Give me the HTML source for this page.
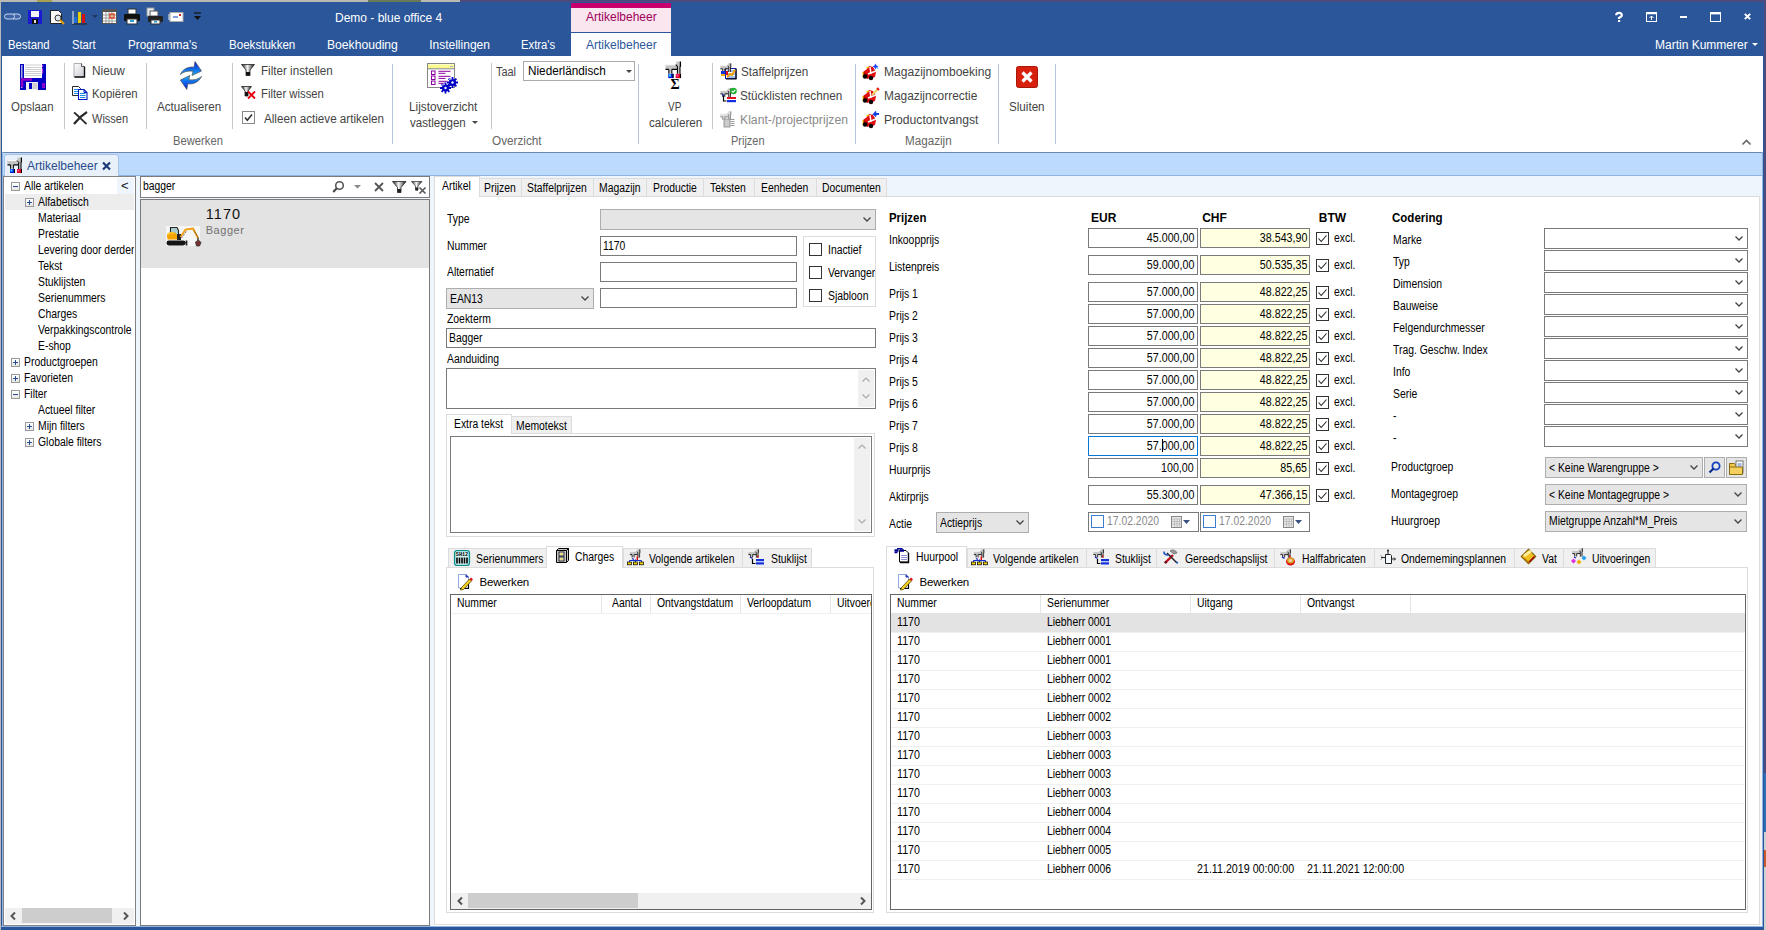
<!DOCTYPE html>
<html><head><meta charset="utf-8">
<style>
*{box-sizing:border-box;margin:0;padding:0}
html,body{width:1766px;height:930px;overflow:hidden;background:#fff;font-family:"Liberation Sans",sans-serif;position:relative}
.a{position:absolute}
svg.a{overflow:visible}
.t{position:absolute;white-space:nowrap;line-height:1}
.f{letter-spacing:-0.3px}
</style></head><body>

<div class="a" style="left:0px;top:0px;width:460px;height:2px;background:#b9b9b4;"></div>
<div class="a" style="left:460px;top:0px;width:1306px;height:2px;background:#4d4a7e;"></div>
<div class="a" style="left:368px;top:0px;width:53px;height:2px;background:#6a7a58;"></div>
<div class="a" style="left:37px;top:0px;width:15px;height:2px;background:#a8a050;"></div>
<div class="a" style="left:1764px;top:0px;width:2px;height:930px;background:#4d4a7e;"></div>
<div class="a" style="left:0px;top:2px;width:1764px;height:54px;background:#2b579a;"></div>
<svg class="a" style="left:5px;top:12px;" width="15" height="9" viewBox="0 0 15 9"><path d="M2 2h5a2.5 2.5 0 0 1 0 5H2a2.5 2.5 0 0 1 0-5zM8 2h5a2.5 2.5 0 0 1 0 5H8" fill="#3d63a8" stroke="#c9d6ee" stroke-width="1"/></svg>
<svg class="a" style="left:28px;top:10px;" width="14" height="14" viewBox="0 0 14 14"><rect x="0" y="0" width="14" height="14" fill="#1a1ad0"/><rect x="3" y="1" width="8" height="6" fill="#f4f4f4"/><rect x="4" y="9" width="6" height="5" fill="#111"/><rect x="6" y="10" width="2" height="3" fill="#ddd"/></svg>
<svg class="a" style="left:50px;top:10px;" width="15" height="14" viewBox="0 0 15 14"><path d="M0.5 0.5h8l3 3v10h-11z" fill="#f8f8f8" stroke="#222"/><circle cx="8" cy="8" r="3" fill="#dfe6ee" stroke="#333"/><path d="M10 10l4 4" stroke="#e8a000" stroke-width="2"/></svg>
<svg class="a" style="left:71px;top:9px;" width="16" height="16" viewBox="0 0 16 16"><path d="M1 15h15" stroke="#222"/><rect x="3" y="8" width="3" height="6" fill="#1f6fd8"/><rect x="7" y="3" width="3" height="11" fill="#e8d000"/><rect x="11" y="5" width="3" height="9" fill="#d81010"/><path d="M2 2v13" stroke="#eee"/></svg>
<svg class="a" style="left:92px;top:15px;" width="6" height="3" viewBox="0 0 6 3"><path d="M0 0h6l-3 3z" fill="#1d3563"/></svg>
<svg class="a" style="left:102px;top:9px;" width="15" height="15" viewBox="0 0 15 15"><rect x="0" y="0" width="15" height="15" fill="#555"/><rect x="1" y="3" width="13" height="11" fill="#fff"/><path d="M1 6h13M1 9h13M1 12h13M4 3v11M7 3v11M10 3v11" stroke="#999" stroke-width="1"/><rect x="8" y="5" width="4" height="4" fill="none" stroke="#e04010" stroke-width="1.3"/></svg>
<svg class="a" style="left:124px;top:9px;" width="16" height="16" viewBox="0 0 16 16"><rect x="4" y="0" width="8" height="5" fill="#fff" stroke="#333"/><rect x="0" y="5" width="16" height="7" rx="1" fill="#111"/><rect x="3" y="10" width="10" height="5" fill="#fff" stroke="#333"/><rect x="6" y="11" width="4" height="2" fill="#2a9fd0"/></svg>
<svg class="a" style="left:146px;top:8px;" width="17" height="17" viewBox="0 0 17 17"><rect x="1" y="0" width="7" height="8" fill="#e8eef6" stroke="#999"/><rect x="4" y="3" width="8" height="5" fill="#fff" stroke="#555"/><rect x="2" y="8" width="15" height="6" rx="1" fill="#222"/><rect x="5" y="12" width="9" height="4" fill="#fff" stroke="#333"/><rect x="8" y="13" width="3" height="1.5" fill="#2a9fd0"/></svg>
<svg class="a" style="left:168px;top:12px;" width="16" height="10" viewBox="0 0 16 10"><rect x="2" y="0.5" width="13" height="9" fill="#fff" stroke="#aaa"/><path d="M0 3h2M0 5h2M0 7h2" stroke="#eee"/><path d="M5 5h5" stroke="#5a7fd0" stroke-width="1.5"/><rect x="11" y="2" width="2" height="2" fill="#d02020"/></svg>
<svg class="a" style="left:194px;top:13px;" width="7" height="7" viewBox="0 0 7 7"><path d="M0 0h7" stroke="#111" stroke-width="1.2"/><path d="M0 3h7l-3.5 4z" fill="#111"/></svg>
<div class="t " style="left:335px;top:12.00px;font-size:12px;color:#fff;">Demo - blue office 4</div>
<svg class="a" style="left:1615px;top:12px;" width="8" height="10" viewBox="0 0 8 10"><path d="M1.2 3.2C1.2 1.5 2.5 0.8 4 0.8S6.8 1.6 6.8 3.2 5 5 4 5.8V7" fill="none" stroke="#fff" stroke-width="2.2"/><rect x="3" y="8" width="2.2" height="2" fill="#fff"/></svg>
<svg class="a" style="left:1646px;top:12px;" width="11" height="10" viewBox="0 0 11 10"><rect x="0.5" y="0.5" width="10" height="9" fill="none" stroke="#fff" stroke-width="1"/><path d="M1 1.5h9" stroke="#fff" stroke-width="1.5"/><path d="M5.5 8V4M3.5 6L5.5 4L7.5 6" fill="none" stroke="#fff" stroke-width="1"/></svg>
<div class="a" style="left:1680px;top:16px;width:7px;height:2px;background:#fff;"></div>
<svg class="a" style="left:1710px;top:12px;" width="11" height="10" viewBox="0 0 11 10"><rect x="0.5" y="0.5" width="10" height="9" fill="none" stroke="#fff" stroke-width="1"/><path d="M0.5 1.5h10" stroke="#fff" stroke-width="1.8"/></svg>
<svg class="a" style="left:1744px;top:13px;" width="7" height="7" viewBox="0 0 7 7"><path d="M0.8 0.8L6.2 6.2M6.2 0.8L0.8 6.2" stroke="#fff" stroke-width="1.9"/></svg>
<div class="a" style="left:571px;top:3px;width:100px;height:5px;background:#c8006e;"></div>
<div class="a" style="left:571px;top:8px;width:100px;height:24px;background:#f9e6ef;"></div>
<div class="t " style="left:586px;top:11.00px;font-size:12px;color:#a0005a;">Artikelbeheer</div>
<div class="t " style="left:8.2px;top:39.00px;font-size:12px;color:#fff;transform:scaleX(0.945);transform-origin:0 0;">Bestand</div>
<div class="t " style="left:72.3px;top:39.00px;font-size:12px;color:#fff;transform:scaleX(0.935);transform-origin:0 0;">Start</div>
<div class="t " style="left:128.4px;top:39.00px;font-size:12px;color:#fff;transform:scaleX(0.972);transform-origin:0 0;">Programma's</div>
<div class="t " style="left:228.7px;top:39.00px;font-size:12px;color:#fff;transform:scaleX(0.965);transform-origin:0 0;">Boekstukken</div>
<div class="t " style="left:327.4px;top:39.00px;font-size:12px;color:#fff;transform:scaleX(1.011);transform-origin:0 0;">Boekhouding</div>
<div class="t " style="left:429.2px;top:39.00px;font-size:12px;color:#fff;transform:scaleX(1.0);transform-origin:0 0;">Instellingen</div>
<div class="t " style="left:521.4px;top:39.00px;font-size:12px;color:#fff;transform:scaleX(0.939);transform-origin:0 0;">Extra's</div>
<div class="t " style="left:1655px;top:39.00px;font-size:12px;color:#fff;">Martin Kummerer</div>
<svg class="a" style="left:1752px;top:43px;" width="6" height="3" viewBox="0 0 6 3"><path d="M0 0h6l-3 3z" fill="#fff"/></svg>
<div class="a" style="left:571px;top:33px;width:100px;height:24px;background:#fff;"></div>
<div class="t " style="left:586px;top:39.00px;font-size:12px;color:#2b579a;">Artikelbeheer</div>
<div class="a" style="left:2px;top:56px;width:1760px;height:96px;background:#fff;"></div>
<div class="a" style="left:2px;top:152px;width:1760px;height:1px;background:#6f86ad;"></div>
<div class="a" style="left:64px;top:63px;width:1px;height:66px;background:#c6c6c6;"></div>
<div class="a" style="left:146px;top:63px;width:1px;height:66px;background:#c6c6c6;"></div>
<div class="a" style="left:232px;top:63px;width:1px;height:66px;background:#c6c6c6;"></div>
<div class="a" style="left:392px;top:64px;width:1px;height:80px;background:#b4c4dc;"></div>
<div class="a" style="left:491px;top:63px;width:1px;height:66px;background:#c6c6c6;"></div>
<div class="a" style="left:638px;top:64px;width:1px;height:80px;background:#b4c4dc;"></div>
<div class="a" style="left:712px;top:63px;width:1px;height:66px;background:#c6c6c6;"></div>
<div class="a" style="left:855px;top:64px;width:1px;height:80px;background:#b4c4dc;"></div>
<div class="a" style="left:998px;top:64px;width:1px;height:80px;background:#b4c4dc;"></div>
<div class="a" style="left:1055px;top:64px;width:1px;height:80px;background:#b4c4dc;"></div>
<svg class="a" style="left:20px;top:64px;" width="26" height="26" viewBox="0 0 26 26"><rect x="0" y="0" width="26" height="26" fill="#0000c4"/><rect x="1" y="1" width="1.5" height="23" fill="#a8a8e0"/><rect x="4" y="0" width="18" height="14" fill="#fff"/><path d="M5 1h16M5 3.5h16M5 5.5h16M5 7.5h16M5 9.5h16M5 11.5h16" stroke="#c8c8c8" stroke-width="0.9"/><path d="M2 14v9M2 15.5h10" stroke="#9000c8" stroke-width="2.4"/><rect x="6" y="18" width="12" height="8" fill="#f0f0f0"/><rect x="9" y="19" width="3" height="6" fill="#0000c4"/><rect x="12.5" y="19" width="5" height="6" fill="#d0d0d0"/><path d="M22.5 1v2M22.5 4.5v5" stroke="#c040e0" stroke-width="1.2"/><rect x="22" y="19" width="3" height="5" fill="#9000c8"/></svg>
<div class="t " style="left:11.1px;top:101.00px;font-size:12px;color:#444;transform:scaleX(0.953);transform-origin:0 0;">Opslaan</div>
<svg class="a" style="left:73px;top:63px;" width="13" height="15" viewBox="0 0 13 15"><defs><linearGradient id="ng" x1="0" y1="0" x2="1" y2="1"><stop offset="0" stop-color="#fff"/><stop offset="1" stop-color="#c8c8d0"/></linearGradient></defs><path d="M1 0.5h7.5l3 3V14H1z" fill="url(#ng)" stroke="#999" stroke-width="0.8"/><path d="M11.5 3.5V14H1.5" fill="none" stroke="#111" stroke-width="1.4"/><path d="M8.5 0.5v3h3" fill="#fff" stroke="#333" stroke-width="0.8"/></svg>
<div class="t " style="left:92.4px;top:65.00px;font-size:12px;color:#444;transform:scaleX(0.984);transform-origin:0 0;">Nieuw</div>
<svg class="a" style="left:72px;top:86px;" width="16" height="14" viewBox="0 0 16 14"><path d="M0.5 0.5h6l2 2v7h-8z" fill="#fff" stroke="#111" stroke-width="0.9"/><path d="M2 3.5h4M2 5.5h4M2 7.5h4" stroke="#1c8ee8" stroke-width="1"/><path d="M6.5 3.5h5.5l3 3v7H6.5z" fill="#fff" stroke="#0018c0" stroke-width="1.1"/><path d="M8 7.5h5.5M8 9.5h5.5M8 11.5h5.5" stroke="#1c8ee8" stroke-width="1"/><path d="M12 3.5v3h3" fill="none" stroke="#0018c0"/></svg>
<div class="t " style="left:92.4px;top:88.00px;font-size:12px;color:#444;transform:scaleX(0.949);transform-origin:0 0;">Kopiëren</div>
<svg class="a" style="left:73px;top:111px;" width="15" height="14" viewBox="0 0 15 14"><path d="M1 1.5C4 3.5 9 9 13.5 13" stroke="#2a2a2a" stroke-width="1.8" fill="none"/><path d="M14 1C10 3.5 4 9 1 13" stroke="#2a2a2a" stroke-width="2.2" fill="none"/></svg>
<div class="t " style="left:92.4px;top:113.00px;font-size:12px;color:#444;transform:scaleX(0.918);transform-origin:0 0;">Wissen</div>
<svg class="a" style="left:180px;top:61px;" width="22" height="30" viewBox="0 0 22 30"><defs><linearGradient id="rg" x1="0" y1="0" x2="0" y2="1"><stop offset="0" stop-color="#0018d8"/><stop offset="1" stop-color="#20b0f8"/></linearGradient><linearGradient id="rg2" x1="0" y1="1" x2="0" y2="0"><stop offset="0" stop-color="#0018d8"/><stop offset="1" stop-color="#20b0f8"/></linearGradient></defs><path d="M0.3 13.5C3 7.5 9 5.5 14 6.2L15 0.5L21.5 10L12 14.5L13 10.2C8 9.8 3.5 10.5 0.3 13.5Z" fill="url(#rg)" stroke="#505050" stroke-width="0.7"/><path d="M21.5 15.5C18.8 21.5 12.8 23.5 7.8 22.8L6.8 28.5L0.3 19L9.8 14.5L8.8 18.8C13.8 19.2 18.3 18.5 21.5 15.5Z" fill="url(#rg2)" stroke="#505050" stroke-width="0.7"/></svg>
<div class="t " style="left:157.3px;top:101.00px;font-size:12px;color:#444;transform:scaleX(0.971);transform-origin:0 0;">Actualiseren</div>
<div class="t " style="left:172.6px;top:135.00px;font-size:12px;color:#666;transform:scaleX(0.935);transform-origin:0 0;">Bewerken</div>
<svg class="a" style="left:241px;top:64px;" width="14" height="12" viewBox="0 0 14 12"><defs><linearGradient id="fg2" x1="0" x2="1"><stop offset="0" stop-color="#111"/><stop offset="0.45" stop-color="#f4f4f4"/><stop offset="1" stop-color="#111"/></linearGradient></defs><path d="M0.5 0.5h13l-4.5 5.5v5.5h-4v-5.5z" fill="url(#fg2)" stroke="#222" stroke-width="0.8"/><rect x="5" y="8" width="4" height="3.5" fill="#111"/></svg>
<div class="t " style="left:260.6px;top:65.00px;font-size:12px;color:#444;transform:scaleX(0.97);transform-origin:0 0;">Filter instellen</div>
<svg class="a" style="left:241px;top:86px;" width="16" height="14" viewBox="0 0 16 14"><path d="M0.5 0.5h10l-3.5 4.5v5h-3v-5z" fill="url(#fg2)" stroke="#222" stroke-width="0.8"/><rect x="4" y="6" width="3" height="4" fill="#111"/><path d="M7 5.5l7 7M14 5.5l-7 7" stroke="#e80010" stroke-width="1.8"/></svg>
<div class="t " style="left:260.6px;top:88.00px;font-size:12px;color:#444;transform:scaleX(0.943);transform-origin:0 0;">Filter wissen</div>
<div class="a" style="left:242px;top:111px;width:13px;height:13px;background:#fff;border:1px solid #888;"></div>
<svg class="a" style="left:242px;top:111px;" width="13" height="13" viewBox="0 0 13 13"><path d="M3 6.5L5.3 9.3L10 3.5" fill="none" stroke="#333" stroke-width="1.6"/></svg>
<div class="t " style="left:264.4px;top:113.00px;font-size:12px;color:#444;transform:scaleX(0.972);transform-origin:0 0;">Alleen actieve artikelen</div>
<svg class="a" style="left:427px;top:63px;" width="30" height="30" viewBox="0 0 30 30"><rect x="0.5" y="0.5" width="27" height="24" fill="#fff" stroke="#888" stroke-width="1"/><rect x="1" y="1.5" width="26" height="4" fill="#fafa90"/><path d="M1 5.8h26" stroke="#888"/><rect x="23" y="3" width="3" height="1" fill="#b0b0e0"/><rect x="4.5" y="8" width="3.5" height="3.5" fill="none" stroke="#8a00a0" stroke-width="1"/><rect x="4.5" y="13" width="3.5" height="3.5" fill="none" stroke="#8a00a0" stroke-width="1"/><rect x="4.5" y="18" width="3.5" height="3.5" fill="none" stroke="#8a00a0" stroke-width="1"/><path d="M11.5 8.3h12M11.5 10.3h7M11.5 13.3h12M11.5 15.4h7M11.5 18.3h9M11.5 20.3h7" stroke="#8a00a0" stroke-width="1"/><g fill="#0000c8"><circle cx="18.5" cy="25" r="3.6"/><path d="M18.5 19.5v11M13 25h11M14.6 21.1l7.8 7.8M22.4 21.1l-7.8 7.8" stroke="#0000c8" stroke-width="1.8"/><circle cx="25.5" cy="19.5" r="3.6"/><path d="M25.5 14v11M20 19.5h11M21.6 15.6l7.8 7.8M29.4 15.6l-7.8 7.8" stroke="#0000c8" stroke-width="1.8"/></g><circle cx="18.5" cy="25" r="1.2" fill="#fff"/><circle cx="25.5" cy="19.5" r="1.2" fill="#fff"/><path d="M15 22l3 -1M22 16.5l3 -1" stroke="#a0a0f0" stroke-width="1.5"/></svg>
<div class="t " style="left:408.6px;top:101.00px;font-size:12px;color:#444;transform:scaleX(0.985);transform-origin:0 0;">Lijstoverzicht</div>
<div class="t " style="left:409.7px;top:117.00px;font-size:12px;color:#444;transform:scaleX(0.961);transform-origin:0 0;">vastleggen</div>
<svg class="a" style="left:472px;top:121px;" width="6" height="3" viewBox="0 0 6 3"><path d="M0 0h6l-3 3z" fill="#444"/></svg>
<div class="t " style="left:491.5px;top:135.00px;font-size:12px;color:#666;transform:scaleX(0.979);transform-origin:0 0;">Overzicht</div>
<div class="t " style="left:496.3px;top:66.00px;font-size:12px;color:#444;transform:scaleX(0.909);transform-origin:0 0;">Taal</div>
<div class="a" style="left:523px;top:61px;width:112px;height:20px;background:#fff;border:1px solid #ababab;"></div>
<div class="t " style="left:527.5px;top:65.00px;font-size:12px;color:#000;transform:scaleX(0.979);transform-origin:0 0;">Niederländisch</div>
<svg class="a" style="left:626px;top:70px;" width="6" height="3" viewBox="0 0 6 3"><path d="M0 0h6l-3 3z" fill="#444"/></svg>
<svg class="a" style="left:665px;top:61px;" width="18" height="29" viewBox="0 0 18 29"><g transform="translate(0 0) scale(1.07)"><path d="M0.5 3.5h10.5l1 1.5v2.5H6.5v4h-3v-4H0.5z" fill="#c4c4c4"/><path d="M1 3.6h9" stroke="#fff" stroke-width="0.9"/><path d="M0.5 7.8h3M6.5 7.8h5" stroke="#000" stroke-width="1.2"/><path d="M3.6 7.8v4M6.4 7.8v4" stroke="#000" stroke-width="1"/><rect x="10.5" y="0.5" width="4" height="4.5" fill="#c4c4c4"/><path d="M14.4 0.5v5" stroke="#000" stroke-width="1.2"/><rect x="11.5" y="5" width="2.6" height="7" fill="#c4c4c4"/><path d="M11.6 5.5v6.5M14 5v7" stroke="#000" stroke-width="1"/><path d="M10 3.5l2 2" stroke="#000" stroke-width="1"/><rect x="3" y="12" width="5" height="4" fill="#0020e0"/><rect x="3.5" y="12.5" width="2" height="2" fill="#30e0ff"/><rect x="10" y="12" width="5" height="4" fill="#e00010"/><rect x="10.5" y="12.5" width="2" height="2" fill="#ff40c0"/><path d="M7.5 12v4M14.5 12v4" stroke="#000" stroke-width="1"/></g><text x="5.5" y="28" font-size="14" font-family="Liberation Serif" font-weight="bold" fill="#000">Σ</text></svg>
<div class="t " style="left:668.2px;top:101.00px;font-size:12px;color:#444;transform:scaleX(0.831);transform-origin:0 0;">VP</div>
<div class="t " style="left:649.2px;top:117.00px;font-size:12px;color:#444;transform:scaleX(0.974);transform-origin:0 0;">calculeren</div>
<svg class="a" style="left:720px;top:63px;" width="17" height="16" viewBox="0 0 17 16"><rect x="5.5" y="5.5" width="10.5" height="10" fill="#fff" stroke="#1020a0" stroke-width="1"/><path d="M16 6v10H6" fill="none" stroke="#000" stroke-width="1.2"/><path d="M7 8h8M7 11h8M7 14h8" stroke="#4080e0" stroke-width="1"/><path d="M7 14l3-3 2 1 3-5" fill="none" stroke="#f0a000" stroke-width="2"/><g transform="translate(0 0) scale(0.75)"><path d="M0.5 3.5h10.5l1 1.5v2.5H6.5v4h-3v-4H0.5z" fill="#c4c4c4"/><path d="M1 3.6h9" stroke="#fff" stroke-width="0.9"/><path d="M0.5 7.8h3M6.5 7.8h5" stroke="#000" stroke-width="1.2"/><path d="M3.6 7.8v4M6.4 7.8v4" stroke="#000" stroke-width="1"/><rect x="10.5" y="0.5" width="4" height="4.5" fill="#c4c4c4"/><path d="M14.4 0.5v5" stroke="#000" stroke-width="1.2"/><rect x="11.5" y="5" width="2.6" height="7" fill="#c4c4c4"/><path d="M11.6 5.5v6.5M14 5v7" stroke="#000" stroke-width="1"/><path d="M10 3.5l2 2" stroke="#000" stroke-width="1"/></g><rect x="1" y="8" width="4" height="3" fill="#1830e0"/><rect x="6" y="8" width="2" height="4" fill="#e01020"/><rect x="1" y="11" width="4" height="2" fill="#f0b000"/></svg>
<div class="t " style="left:741.3px;top:66.00px;font-size:12px;color:#444;transform:scaleX(0.972);transform-origin:0 0;">Staffelprijzen</div>
<svg class="a" style="left:720px;top:87px;" width="17" height="16" viewBox="0 0 17 16"><g transform="translate(0 1) scale(0.75)"><path d="M0.5 3.5h10.5l1 1.5v2.5H6.5v4h-3v-4H0.5z" fill="#c4c4c4"/><path d="M1 3.6h9" stroke="#fff" stroke-width="0.9"/><path d="M0.5 7.8h3M6.5 7.8h5" stroke="#000" stroke-width="1.2"/><path d="M3.6 7.8v4M6.4 7.8v4" stroke="#000" stroke-width="1"/><rect x="10.5" y="0.5" width="4" height="4.5" fill="#c4c4c4"/><path d="M14.4 0.5v5" stroke="#000" stroke-width="1.2"/><rect x="11.5" y="5" width="2.6" height="7" fill="#c4c4c4"/><path d="M11.6 5.5v6.5M14 5v7" stroke="#000" stroke-width="1"/><path d="M10 3.5l2 2" stroke="#000" stroke-width="1"/></g><circle cx="13.5" cy="4" r="3.3" fill="#20b030"/><path d="M11.8 4l1.3 1.3 2.2-2.5" stroke="#fff" stroke-width="1.1" fill="none"/><path d="M3.5 8v6h3" fill="none" stroke="#000" stroke-width="1.2"/><path d="M2 7.5l2 1" stroke="#1020c0" stroke-width="1.2"/><rect x="7" y="10" width="9" height="2" fill="#e01020"/><rect x="7" y="13" width="9" height="2.2" fill="#1030e0"/></svg>
<div class="t " style="left:740.3px;top:90.00px;font-size:12px;color:#444;transform:scaleX(0.977);transform-origin:0 0;">Stücklisten rechnen</div>
<svg class="a" style="left:720px;top:111px;" width="17" height="17" viewBox="0 0 17 17"><g transform="translate(0 0) scale(0.75)"><path d="M0.5 3.5h10.5l1 1.5v2.5H6.5v4h-3v-4H0.5z" fill="#ddd"/><path d="M1 3.6h9" stroke="#fff" stroke-width="0.9"/><path d="M0.5 7.8h3M6.5 7.8h5" stroke="#777" stroke-width="1.2"/><path d="M3.6 7.8v4M6.4 7.8v4" stroke="#777" stroke-width="1"/><rect x="10.5" y="0.5" width="4" height="4.5" fill="#ddd"/><path d="M14.4 0.5v5" stroke="#777" stroke-width="1.2"/><rect x="11.5" y="5" width="2.6" height="7" fill="#ddd"/><path d="M11.6 5.5v6.5M14 5v7" stroke="#777" stroke-width="1"/><path d="M10 3.5l2 2" stroke="#777" stroke-width="1"/></g><rect x="4" y="8" width="6" height="8" fill="#ccc" stroke="#888" stroke-width="0.8"/><path d="M10.5 8.5h4M10.5 10.5h4M10.5 12.5h4M10.5 14.5h4" stroke="#999" stroke-width="1.2"/></svg>
<div class="t " style="left:740.3px;top:114.00px;font-size:12px;color:#8a8a8a;transform:scaleX(1.019);transform-origin:0 0;">Klant-/projectprijzen</div>
<div class="t " style="left:730.8px;top:135.00px;font-size:12px;color:#666;transform:scaleX(0.913);transform-origin:0 0;">Prijzen</div>
<svg class="a" style="left:862px;top:63px;" width="18" height="17" viewBox="0 0 18 17"><path d="M1 9l4-3 2-3 4 1 3 5-1 5-5 2-6-2z" fill="#e01010"/><path d="M1 9l5 2v5l-5-2z" fill="#b80000"/><path d="M6 11l8-3" stroke="#f8f8f8" stroke-width="1.6"/><path d="M8 4l1 7" stroke="#fff" stroke-width="1.4"/><path d="M4 5l3-1" stroke="#f0d000" stroke-width="1.2"/><path d="M1 9v5" stroke="#f0d000"/><circle cx="3" cy="13.5" r="2.2" fill="#000"/><circle cx="9" cy="15" r="2.2" fill="#000"/><path d="M13.5 0.5l1 2 2 1-2 1-1 2-1-2-2-1 2-1z" fill="#2040ff"/><path d="M15 4l1 2" stroke="#40c0ff"/></svg>
<div class="t " style="left:884.2px;top:66.00px;font-size:12px;color:#444;transform:scaleX(1.004);transform-origin:0 0;">Magazijnomboeking</div>
<svg class="a" style="left:862px;top:87px;" width="18" height="17" viewBox="0 0 18 17"><path d="M1 9l4-3 2-3 4 1 3 5-1 5-5 2-6-2z" fill="#e01010"/><path d="M1 9l5 2v5l-5-2z" fill="#b80000"/><path d="M6 11l8-3" stroke="#f8f8f8" stroke-width="1.6"/><path d="M8 4l1 7" stroke="#fff" stroke-width="1.4"/><path d="M4 5l3-1" stroke="#f0d000" stroke-width="1.2"/><path d="M1 9v5" stroke="#f0d000"/><circle cx="3" cy="13.5" r="2.2" fill="#000"/><circle cx="9" cy="15" r="2.2" fill="#000"/><path d="M10 8l6-6" stroke="#f0d060" stroke-width="2"/><path d="M15 1l2 2" stroke="#e01010" stroke-width="2"/></svg>
<div class="t " style="left:884.2px;top:90.00px;font-size:12px;color:#444;transform:scaleX(0.992);transform-origin:0 0;">Magazijncorrectie</div>
<svg class="a" style="left:862px;top:111px;" width="18" height="17" viewBox="0 0 18 17"><path d="M1 9l4-3 2-3 4 1 3 5-1 5-5 2-6-2z" fill="#e01010"/><path d="M1 9l5 2v5l-5-2z" fill="#b80000"/><path d="M6 11l8-3" stroke="#f8f8f8" stroke-width="1.6"/><path d="M8 4l1 7" stroke="#fff" stroke-width="1.4"/><path d="M4 5l3-1" stroke="#f0d000" stroke-width="1.2"/><path d="M1 9v5" stroke="#f0d000"/><circle cx="3" cy="13.5" r="2.2" fill="#000"/><circle cx="9" cy="15" r="2.2" fill="#000"/><path d="M17 3h-5l2-2.5M12 3l2 2.5" stroke="#1040e0" stroke-width="1.8" fill="none"/></svg>
<div class="t " style="left:884.2px;top:114.00px;font-size:12px;color:#444;transform:scaleX(1.01);transform-origin:0 0;">Productontvangst</div>
<div class="t " style="left:904.8px;top:135.00px;font-size:12px;color:#666;transform:scaleX(0.972);transform-origin:0 0;">Magazijn</div>
<svg class="a" style="left:1016px;top:66px;" width="22" height="22" viewBox="0 0 22 22"><rect x="0.5" y="0.5" width="21" height="21" rx="2" fill="#d8200e" stroke="#a81808" stroke-width="1"/><path d="M6.5 6.5L15.5 15.5M15.5 6.5L6.5 15.5" stroke="#fff" stroke-width="3.2"/></svg>
<div class="t " style="left:1009.2px;top:101.00px;font-size:12px;color:#444;transform:scaleX(0.97);transform-origin:0 0;">Sluiten</div>
<svg class="a" style="left:1742px;top:139px;" width="9" height="6" viewBox="0 0 9 6"><path d="M0.5 5.5L4.5 1.5L8.5 5.5" fill="none" stroke="#666" stroke-width="1.6"/></svg>
<div class="a" style="left:2px;top:153px;width:1760px;height:22px;background:#bcdafc;"></div>
<div class="a" style="left:2px;top:175px;width:1760px;height:1px;background:#8fb3e3;"></div>
<div class="a" style="left:4px;top:154px;width:115px;height:22px;background:#e8f0fa;border:1px solid #a7c3ea;border-bottom:none;border-radius:3px 3px 0 0;"></div>
<svg class="a" style="left:7px;top:157px;" width="16" height="16" viewBox="0 0 16 16"><path d="M0.5 3.5h10.5l1 1.5v2.5H6.5v4h-3v-4H0.5z" fill="#c4c4c4"/><path d="M1 3.6h9" stroke="#fff" stroke-width="0.9"/><path d="M0.5 7.8h3M6.5 7.8h5" stroke="#000" stroke-width="1.2"/><path d="M3.6 7.8v4M6.4 7.8v4" stroke="#000" stroke-width="1"/><rect x="10.5" y="0.5" width="4" height="4.5" fill="#c4c4c4"/><path d="M14.4 0.5v5" stroke="#000" stroke-width="1.2"/><rect x="11.5" y="5" width="2.6" height="7" fill="#c4c4c4"/><path d="M11.6 5.5v6.5M14 5v7" stroke="#000" stroke-width="1"/><path d="M10 3.5l2 2" stroke="#000" stroke-width="1"/><rect x="3" y="12" width="5" height="4" fill="#0020e0"/><rect x="3.5" y="12.5" width="2" height="2" fill="#30e0ff"/><rect x="10" y="12" width="5" height="4" fill="#e00010"/><rect x="10.5" y="12.5" width="2" height="2" fill="#ff40c0"/><path d="M7.5 12v4M14.5 12v4" stroke="#000" stroke-width="1"/></svg>
<div class="t " style="left:27px;top:160.00px;font-size:12px;color:#2b4c8c;">Artikelbeheer</div>
<svg class="a" style="left:102px;top:162px;" width="9" height="8" viewBox="0 0 9 8"><path d="M1 0.5L8 7.5M8 0.5L1 7.5" stroke="#1c3a7a" stroke-width="2.2"/></svg>
<div class="a" style="left:2px;top:176px;width:1760px;height:749px;background:#eef5fd;"></div>
<div class="a" style="left:3px;top:176px;width:133px;height:750px;background:#fff;border:1px solid #828282;border-bottom:none;"></div>
<div class="a" style="left:5px;top:194px;width:129px;height:16px;background:#ededed;"></div>
<div class="a" style="left:117px;top:178px;width:17px;height:16px;background:#eef5fd;"></div>
<div class="t " style="left:121px;top:179.00px;font-size:13px;color:#111;">&lt;</div>
<div class="a" style="left:5px;top:177px;width:129px;height:300px;overflow:hidden">
<div class="t " style="left:19px;top:3.00px;font-size:12px;color:#000;transform:scaleX(0.865);transform-origin:0 0;">Alle artikelen</div>
<div class="a" style="left:6px;top:5px;width:9px;height:9px;background:linear-gradient(#fff,#e6e6e6);border:1px solid #999;"></div>
<div class="a" style="left:8px;top:9px;width:5px;height:1px;background:#2b4c8c;"></div>
<div class="t " style="left:33px;top:19.00px;font-size:12px;color:#000;transform:scaleX(0.865);transform-origin:0 0;">Alfabetisch</div>
<div class="a" style="left:20px;top:21px;width:9px;height:9px;background:linear-gradient(#fff,#e6e6e6);border:1px solid #999;"></div>
<div class="a" style="left:22px;top:25px;width:5px;height:1px;background:#2b4c8c;"></div>
<div class="a" style="left:24px;top:23px;width:1px;height:5px;background:#2b4c8c;"></div>
<div class="t " style="left:33px;top:35.00px;font-size:12px;color:#000;transform:scaleX(0.865);transform-origin:0 0;">Materiaal</div>
<div class="t " style="left:33px;top:51.00px;font-size:12px;color:#000;transform:scaleX(0.865);transform-origin:0 0;">Prestatie</div>
<div class="t " style="left:33px;top:67.00px;font-size:12px;color:#000;transform:scaleX(0.865);transform-origin:0 0;">Levering door derden</div>
<div class="t " style="left:33px;top:83.00px;font-size:12px;color:#000;transform:scaleX(0.865);transform-origin:0 0;">Tekst</div>
<div class="t " style="left:33px;top:99.00px;font-size:12px;color:#000;transform:scaleX(0.865);transform-origin:0 0;">Stuklijsten</div>
<div class="t " style="left:33px;top:115.00px;font-size:12px;color:#000;transform:scaleX(0.865);transform-origin:0 0;">Serienummers</div>
<div class="t " style="left:32.7px;top:131.00px;font-size:12px;color:#000;transform:scaleX(0.865);transform-origin:0 0;">Charges</div>
<div class="t " style="left:33px;top:147.00px;font-size:12px;color:#000;transform:scaleX(0.865);transform-origin:0 0;">Verpakkingscontrole</div>
<div class="t " style="left:33px;top:163.00px;font-size:12px;color:#000;transform:scaleX(0.865);transform-origin:0 0;">E-shop</div>
<div class="t " style="left:19px;top:179.00px;font-size:12px;color:#000;transform:scaleX(0.865);transform-origin:0 0;">Productgroepen</div>
<div class="a" style="left:6px;top:181px;width:9px;height:9px;background:linear-gradient(#fff,#e6e6e6);border:1px solid #999;"></div>
<div class="a" style="left:8px;top:185px;width:5px;height:1px;background:#2b4c8c;"></div>
<div class="a" style="left:10px;top:183px;width:1px;height:5px;background:#2b4c8c;"></div>
<div class="t " style="left:19px;top:195.00px;font-size:12px;color:#000;transform:scaleX(0.865);transform-origin:0 0;">Favorieten</div>
<div class="a" style="left:6px;top:197px;width:9px;height:9px;background:linear-gradient(#fff,#e6e6e6);border:1px solid #999;"></div>
<div class="a" style="left:8px;top:201px;width:5px;height:1px;background:#2b4c8c;"></div>
<div class="a" style="left:10px;top:199px;width:1px;height:5px;background:#2b4c8c;"></div>
<div class="t " style="left:19px;top:211.00px;font-size:12px;color:#000;transform:scaleX(0.865);transform-origin:0 0;">Filter</div>
<div class="a" style="left:6px;top:213px;width:9px;height:9px;background:linear-gradient(#fff,#e6e6e6);border:1px solid #999;"></div>
<div class="a" style="left:8px;top:217px;width:5px;height:1px;background:#2b4c8c;"></div>
<div class="t " style="left:33px;top:227.00px;font-size:12px;color:#000;transform:scaleX(0.865);transform-origin:0 0;">Actueel filter</div>
<div class="t " style="left:33px;top:243.00px;font-size:12px;color:#000;transform:scaleX(0.865);transform-origin:0 0;">Mijn filters</div>
<div class="a" style="left:20px;top:245px;width:9px;height:9px;background:linear-gradient(#fff,#e6e6e6);border:1px solid #999;"></div>
<div class="a" style="left:22px;top:249px;width:5px;height:1px;background:#2b4c8c;"></div>
<div class="a" style="left:24px;top:247px;width:1px;height:5px;background:#2b4c8c;"></div>
<div class="t " style="left:33px;top:259.00px;font-size:12px;color:#000;transform:scaleX(0.865);transform-origin:0 0;">Globale filters</div>
<div class="a" style="left:20px;top:261px;width:9px;height:9px;background:linear-gradient(#fff,#e6e6e6);border:1px solid #999;"></div>
<div class="a" style="left:22px;top:265px;width:5px;height:1px;background:#2b4c8c;"></div>
<div class="a" style="left:24px;top:263px;width:1px;height:5px;background:#2b4c8c;"></div>
</div>
<div class="a" style="left:5px;top:908px;width:129px;height:16px;background:#f0f0f0;"></div>
<div class="a" style="left:22px;top:908px;width:90px;height:15px;background:#cdcdcd;"></div>
<svg class="a" style="left:10px;top:912px;" width="6" height="8" viewBox="0 0 6 8"><path d="M5 0.5L1.5 4L5 7.5" fill="none" stroke="#555" stroke-width="2"/></svg>
<svg class="a" style="left:123px;top:912px;" width="6" height="8" viewBox="0 0 6 8"><path d="M1 0.5L4.5 4L1 7.5" fill="none" stroke="#555" stroke-width="2"/></svg>
<div class="a" style="left:140px;top:176px;width:290px;height:22px;background:#fff;border:1px solid #7a7a7a;"></div>
<div class="t " style="left:143.3px;top:180.00px;font-size:12px;color:#000;transform:scaleX(0.865);transform-origin:0 0;">bagger</div>
<svg class="a" style="left:332px;top:180px;" width="13" height="14" viewBox="0 0 13 14"><circle cx="7.5" cy="5.5" r="3.8" fill="none" stroke="#555" stroke-width="1.6"/><path d="M4.8 8.3L1.2 12" stroke="#444" stroke-width="2"/></svg>
<svg class="a" style="left:354px;top:185px;" width="8" height="4" viewBox="0 0 8 4"><path d="M0 0h7l-3.5 3.5z" fill="#888"/></svg>
<svg class="a" style="left:374px;top:182px;" width="10" height="10" viewBox="0 0 10 10"><path d="M1 1L9 9M9 1L1 9" stroke="#555" stroke-width="1.8"/></svg>
<svg class="a" style="left:392px;top:181px;" width="15" height="12" viewBox="0 0 15 12"><defs><linearGradient id="fg" x1="0" x2="1"><stop offset="0" stop-color="#111"/><stop offset="0.45" stop-color="#f8f8f8"/><stop offset="1" stop-color="#111"/></linearGradient></defs><path d="M0.5 0.5h13.5l-5 6v5h-3.5v-5z" fill="url(#fg)" stroke="#222" stroke-width="0.8"/><rect x="5.5" y="8" width="3.5" height="3.5" fill="#222"/></svg>
<svg class="a" style="left:411px;top:181px;" width="16" height="14" viewBox="0 0 16 14"><path d="M0.5 0.5h10.5l-4 4.5v4h-2.5v-4z" fill="url(#fg)" stroke="#333" stroke-width="0.7"/><rect x="4.5" y="6.5" width="2.5" height="3" fill="#222"/><path d="M8.5 6.5l6 6M14.5 6.5l-6 6" stroke="#555" stroke-width="1.6"/></svg>
<div class="a" style="left:140px;top:199px;width:290px;height:727px;background:#fff;border:1px solid #7a7a7a;border-bottom:none;"></div>
<div class="a" style="left:141px;top:200px;width:288px;height:68px;background:#e3e3e3;"></div>
<div class="t " style="left:205.7px;top:207.00px;font-size:14.5px;color:#111;letter-spacing:1.1px;">1170</div>
<div class="t " style="left:205.7px;top:225.00px;font-size:11px;color:#707070;letter-spacing:0.55px;">Bagger</div>
<svg class="a" style="left:166px;top:226px;" width="35" height="21" viewBox="0 0 35 21"><rect x="0" y="0" width="34" height="20" fill="#f6f6f6"/><path d="M4.5 1.5h6.5l1.5 3v8h-8z" fill="#a8cccc" stroke="#222" stroke-width="1.1"/><path d="M1 9.5c0-2.5 2.5-3.5 5-3.5s5 1.5 5 4v3.5H1.5z" fill="#f4a400"/><path d="M2 8.5c1-1.5 4-2 6-1" stroke="#ffd040" stroke-width="1.2" fill="none"/><rect x="11" y="8" width="4" height="6" fill="#222"/><rect x="0.5" y="14.5" width="19" height="5" rx="2.4" fill="#141414"/><path d="M20.5 14.5v5" stroke="#222" stroke-width="1.8"/><path d="M19 16.5h2" stroke="#222"/><path d="M14.5 11L19.5 3.5L27 2.5L32 12" fill="none" stroke="#f0a010" stroke-width="1.8"/><path d="M15.5 12L20.5 5M28 4.5L32.5 12" fill="none" stroke="#222" stroke-width="0.8" stroke-dasharray="1 1"/><path d="M32 12v2.5" stroke="#222" stroke-width="1.3"/><path d="M29.5 16l3-2 2.5 2.5-1.5 3.5h-3z" fill="#7a3030" stroke="#333" stroke-width="0.8"/></svg>
<div class="a" style="left:430px;top:176px;width:4px;height:750px;background:#eef5fd;"></div>
<div class="a" style="left:140px;top:925px;width:290px;height:1px;background:#7a7a7a;"></div>
<div class="a" style="left:3px;top:925px;width:133px;height:1px;background:#828282;"></div>
<div class="a" style="left:434px;top:196px;width:1326px;height:729px;background:#fff;border:1px solid #dcdcdc;"></div>
<div class="a" style="left:1760px;top:196px;width:2px;height:729px;background:#f6f4f2;"></div>
<div class="a" style="left:434px;top:176px;width:46px;height:21px;background:#fff;border:1px solid #dcdcdc;border-bottom:none;"></div>
<div class="t " style="left:442.1px;top:180.00px;font-size:12px;color:#000;transform:scaleX(0.865);transform-origin:0 0;">Artikel</div>
<div class="a" style="left:479px;top:178px;width:43px;height:19px;background:#f0f0f0;border:1px solid #dcdcdc;"></div>
<div class="t " style="left:484.3px;top:182.00px;font-size:12px;color:#000;transform:scaleX(0.865);transform-origin:0 0;">Prijzen</div>
<div class="a" style="left:521px;top:178px;width:73px;height:19px;background:#f0f0f0;border:1px solid #dcdcdc;"></div>
<div class="t " style="left:527.3px;top:182.00px;font-size:12px;color:#000;transform:scaleX(0.865);transform-origin:0 0;">Staffelprijzen</div>
<div class="a" style="left:593px;top:178px;width:54px;height:19px;background:#f0f0f0;border:1px solid #dcdcdc;"></div>
<div class="t " style="left:598.8px;top:182.00px;font-size:12px;color:#000;transform:scaleX(0.865);transform-origin:0 0;">Magazijn</div>
<div class="a" style="left:646px;top:178px;width:58px;height:19px;background:#f0f0f0;border:1px solid #dcdcdc;"></div>
<div class="t " style="left:653.1px;top:182.00px;font-size:12px;color:#000;transform:scaleX(0.865);transform-origin:0 0;">Productie</div>
<div class="a" style="left:703px;top:178px;width:52px;height:19px;background:#f0f0f0;border:1px solid #dcdcdc;"></div>
<div class="t " style="left:710.4px;top:182.00px;font-size:12px;color:#000;transform:scaleX(0.865);transform-origin:0 0;">Teksten</div>
<div class="a" style="left:754px;top:178px;width:63px;height:19px;background:#f0f0f0;border:1px solid #dcdcdc;"></div>
<div class="t " style="left:761.2px;top:182.00px;font-size:12px;color:#000;transform:scaleX(0.865);transform-origin:0 0;">Eenheden</div>
<div class="a" style="left:816px;top:178px;width:71px;height:19px;background:#f0f0f0;border:1px solid #dcdcdc;"></div>
<div class="t " style="left:822px;top:182.00px;font-size:12px;color:#000;transform:scaleX(0.865);transform-origin:0 0;">Documenten</div>
<div class="a" style="left:435px;top:196px;width:44px;height:1px;background:#fff;"></div>
<div class="t " style="left:446.5px;top:213.00px;font-size:12px;color:#000;transform:scaleX(0.865);transform-origin:0 0;">Type</div>
<div class="a" style="left:600px;top:209px;width:276px;height:21px;background:#e5e5e5;border:1px solid #adadad;"></div>
<svg class="a" style="left:863.0px;top:217.0px;" width="9" height="5" viewBox="0 0 9 5"><path d="M0.5 0.5L4 4L7.5 0.5" fill="none" stroke="#444" stroke-width="1.3"/></svg>
<div class="t " style="left:446.5px;top:240.00px;font-size:12px;color:#000;transform:scaleX(0.865);transform-origin:0 0;">Nummer</div>
<div class="a" style="left:600px;top:236px;width:197px;height:20px;background:#fff;border:1px solid #7a7a7a;"></div>
<div class="t " style="left:603.4px;top:240.00px;font-size:12px;color:#000;transform:scaleX(0.865);transform-origin:0 0;">1170</div>
<div class="t " style="left:446.5px;top:266.00px;font-size:12px;color:#000;transform:scaleX(0.865);transform-origin:0 0;">Alternatief</div>
<div class="a" style="left:600px;top:262px;width:197px;height:20px;background:#fff;border:1px solid #7a7a7a;"></div>
<div class="a" style="left:446px;top:288px;width:148px;height:21px;background:#e5e5e5;border:1px solid #adadad;"></div>
<svg class="a" style="left:581.0px;top:296.0px;" width="9" height="5" viewBox="0 0 9 5"><path d="M0.5 0.5L4 4L7.5 0.5" fill="none" stroke="#444" stroke-width="1.3"/></svg>
<div class="t " style="left:450px;top:293.00px;font-size:12px;color:#000;transform:scaleX(0.865);transform-origin:0 0;">EAN13</div>
<div class="a" style="left:600px;top:288px;width:197px;height:20px;background:#fff;border:1px solid #7a7a7a;"></div>
<div class="a" style="left:803px;top:236px;width:73px;height:71px;background:#fff;border:1px solid #dcdcdc;"></div>
<div class="a" style="left:804px;top:237px;width:71px;height:69px;overflow:hidden">
<div class="a" style="left:5px;top:6px;width:13px;height:13px;background:#fff;border:1px solid #333;"></div>
<div class="t " style="left:23.799999999999955px;top:7.00px;font-size:12px;color:#000;transform:scaleX(0.865);transform-origin:0 0;">Inactief</div>
<div class="a" style="left:5px;top:29px;width:13px;height:13px;background:#fff;border:1px solid #333;"></div>
<div class="t " style="left:23.799999999999955px;top:30.00px;font-size:12px;color:#000;transform:scaleX(0.865);transform-origin:0 0;">Vervanger</div>
<div class="a" style="left:5px;top:52px;width:13px;height:13px;background:#fff;border:1px solid #333;"></div>
<div class="t " style="left:23.799999999999955px;top:53.00px;font-size:12px;color:#000;transform:scaleX(0.865);transform-origin:0 0;">Sjabloon</div>
</div>
<div class="t " style="left:446.5px;top:313.00px;font-size:12px;color:#000;transform:scaleX(0.865);transform-origin:0 0;">Zoekterm</div>
<div class="a" style="left:446px;top:328px;width:430px;height:20px;background:#fff;border:1px solid #7a7a7a;"></div>
<div class="t " style="left:449px;top:332.00px;font-size:12px;color:#000;transform:scaleX(0.865);transform-origin:0 0;">Bagger</div>
<div class="t " style="left:446.5px;top:353.00px;font-size:12px;color:#000;transform:scaleX(0.865);transform-origin:0 0;">Aanduiding</div>
<div class="a" style="left:446px;top:368px;width:430px;height:41px;background:#fff;border:1px solid #7a7a7a;"></div>
<div class="a" style="left:858px;top:370px;width:16px;height:37px;background:#f0f0f0;"></div>
<svg class="a" style="left:862px;top:377px;" width="8" height="5" viewBox="0 0 8 5"><path d="M0.5 4.5L4 1L7.5 4.5" fill="none" stroke="#aaa" stroke-width="1.2"/></svg>
<svg class="a" style="left:862px;top:394px;" width="8" height="5" viewBox="0 0 8 5"><path d="M0.5 0.5L4 4L7.5 0.5" fill="none" stroke="#aaa" stroke-width="1.2"/></svg>
<div class="a" style="left:446px;top:433px;width:429px;height:104px;background:#fff;border:1px solid #dcdcdc;"></div>
<div class="a" style="left:511px;top:416px;width:61px;height:18px;background:#f0f0f0;border:1px solid #dcdcdc;"></div>
<div class="a" style="left:446px;top:414px;width:66px;height:20px;background:#fff;border:1px solid #dcdcdc;border-bottom:none;"></div>
<div class="t " style="left:454.2px;top:418.00px;font-size:12px;color:#000;transform:scaleX(0.865);transform-origin:0 0;">Extra tekst</div>
<div class="t " style="left:516px;top:420.00px;font-size:12px;color:#000;transform:scaleX(0.865);transform-origin:0 0;">Memotekst</div>
<div class="a" style="left:450px;top:436px;width:422px;height:97px;background:#fff;border:1px solid #7a7a7a;"></div>
<div class="a" style="left:854px;top:438px;width:16px;height:93px;background:#f0f0f0;"></div>
<svg class="a" style="left:858px;top:444px;" width="8" height="5" viewBox="0 0 8 5"><path d="M0.5 4.5L4 1L7.5 4.5" fill="none" stroke="#aaa" stroke-width="1.2"/></svg>
<svg class="a" style="left:858px;top:519px;" width="8" height="5" viewBox="0 0 8 5"><path d="M0.5 0.5L4 4L7.5 0.5" fill="none" stroke="#aaa" stroke-width="1.2"/></svg>
<div class="a" style="left:446px;top:567px;width:428px;height:346px;background:#fff;border:1px solid #dcdcdc;"></div>
<div class="a" style="left:448px;top:548px;width:99px;height:20px;background:#f0f0f0;border:1px solid #dcdcdc;"></div>
<svg class="a" style="left:454px;top:550px;" width="16" height="16" viewBox="0 0 16 16"><rect x="0.5" y="0.5" width="15" height="15" rx="2.5" fill="#a8e4e4" stroke="#108c8c" stroke-width="1.2"/><rect x="2" y="2" width="12" height="12" fill="#d8f4f4"/><text x="1.8" y="6.3" font-size="5.2" font-family="Liberation Mono" font-weight="bold" fill="#000" textLength="12.4" lengthAdjust="spacingAndGlyphs">SH12</text><path d="M3 7.5v6M5.5 7.5v6M8 7.5v6M10.5 7.5v6M13 7.5v6" stroke="#000" stroke-width="1.6"/></svg>
<div class="t " style="left:476px;top:553.00px;font-size:12px;color:#000;transform:scaleX(0.865);transform-origin:0 0;">Serienummers</div>
<div class="a" style="left:623px;top:548px;width:120px;height:20px;background:#f0f0f0;border:1px solid #dcdcdc;"></div>
<svg class="a" style="left:627px;top:549px;" width="17" height="16" viewBox="0 0 17 16"><g transform="translate(2.5 0) scale(0.72)"><path d="M0.5 3.5h10.5l1 1.5v2.5H6.5v4h-3v-4H0.5z" fill="#c4c4c4"/><path d="M1 3.6h9" stroke="#fff" stroke-width="0.9"/><path d="M0.5 7.8h3M6.5 7.8h5" stroke="#000" stroke-width="1.2"/><path d="M3.6 7.8v4M6.4 7.8v4" stroke="#000" stroke-width="1"/><rect x="10.5" y="0.5" width="4" height="4.5" fill="#c4c4c4"/><path d="M14.4 0.5v5" stroke="#000" stroke-width="1.2"/><rect x="11.5" y="5" width="2.6" height="7" fill="#c4c4c4"/><path d="M11.6 5.5v6.5M14 5v7" stroke="#000" stroke-width="1"/><path d="M10 3.5l2 2" stroke="#000" stroke-width="1"/></g><path d="M5 9.5l2 1" stroke="#1020c0" stroke-width="1.2"/><rect x="9.5" y="7.5" width="1.6" height="4" fill="#e01010"/><path d="M2.5 14v-2.5h12V14M8.5 10.5v3.5" fill="none" stroke="#1030d0" stroke-width="1"/><rect x="0.5" y="13" width="4" height="2.8" fill="#f0d000" stroke="#000" stroke-width="0.7"/><rect x="6.5" y="13" width="4" height="2.8" fill="#f0d000" stroke="#000" stroke-width="0.7"/><rect x="12.5" y="13" width="4" height="2.8" fill="#f0d000" stroke="#000" stroke-width="0.7"/></svg>
<div class="t " style="left:648.8px;top:553.00px;font-size:12px;color:#000;transform:scaleX(0.865);transform-origin:0 0;">Volgende artikelen</div>
<div class="a" style="left:742px;top:548px;width:70px;height:20px;background:#f0f0f0;border:1px solid #dcdcdc;"></div>
<svg class="a" style="left:748px;top:549px;" width="17" height="16" viewBox="0 0 17 16"><g transform="translate(0 0) scale(0.72)"><path d="M0.5 3.5h10.5l1 1.5v2.5H6.5v4h-3v-4H0.5z" fill="#c4c4c4"/><path d="M1 3.6h9" stroke="#fff" stroke-width="0.9"/><path d="M0.5 7.8h3M6.5 7.8h5" stroke="#000" stroke-width="1.2"/><path d="M3.6 7.8v4M6.4 7.8v4" stroke="#000" stroke-width="1"/><rect x="10.5" y="0.5" width="4" height="4.5" fill="#c4c4c4"/><path d="M14.4 0.5v5" stroke="#000" stroke-width="1.2"/><rect x="11.5" y="5" width="2.6" height="7" fill="#c4c4c4"/><path d="M11.6 5.5v6.5M14 5v7" stroke="#000" stroke-width="1"/><path d="M10 3.5l2 2" stroke="#000" stroke-width="1"/></g><path d="M2 8l2.5 1.5" stroke="#1020c0" stroke-width="1.2"/><rect x="9" y="6.5" width="1.5" height="2" fill="#e01010"/><path d="M4.5 10v4.5h3" fill="none" stroke="#000" stroke-width="1.2"/><rect x="8" y="10" width="8" height="2.2" fill="#1030e0"/><rect x="8" y="13.3" width="8" height="2.2" fill="#1030e0"/></svg>
<div class="t " style="left:771.1px;top:553.00px;font-size:12px;color:#000;transform:scaleX(0.865);transform-origin:0 0;">Stuklijst</div>
<div class="a" style="left:546px;top:546px;width:77px;height:22px;background:#fff;border:1px solid #dcdcdc;border-bottom:none;"></div>
<svg class="a" style="left:556px;top:548px;" width="13" height="15" viewBox="0 0 13 15"><path d="M2.5 0.5h10v12l-2 2h-10v-12z" fill="#c8c8c8" stroke="#000" stroke-width="1"/><path d="M0.5 2.5h10v12M10.5 2.5l2-2" fill="none" stroke="#000" stroke-width="1"/><rect x="3" y="4" width="5" height="4" fill="#e8e8e8" stroke="#000" stroke-width="0.8"/><rect x="3" y="9" width="5" height="4" fill="#e8e8e8" stroke="#000" stroke-width="0.8"/><rect x="4.5" y="5.5" width="2" height="1.2" fill="#e8d000"/><rect x="4.5" y="10.5" width="2" height="1.2" fill="#e8d000"/></svg>
<div class="t " style="left:575.3px;top:551.00px;font-size:12px;color:#000;transform:scaleX(0.865);transform-origin:0 0;">Charges</div>
<svg class="a" style="left:458px;top:574px;" width="15" height="15" viewBox="0 0 15 15"><path d="M0.5 0.5h7.5l2.5 2.5v11H0.5z" fill="#fff" stroke="#90a8e0" stroke-width="1"/><path d="M8 0.5v2.5h2.5" fill="#2030b0" stroke="#2030b0"/><path d="M10.5 8v6.5H2" fill="none" stroke="#000" stroke-width="1.2"/><path d="M3.5 13.5l8-8.5 2 2-8 8.5-3 0.5z" fill="#f0d020" stroke="#403000" stroke-width="0.7"/><path d="M11.5 5l1.5-1.5 2 2-1.5 1.5z" fill="#e01010"/></svg>
<div class="t " style="left:479.5px;top:577.00px;font-size:11.5px;color:#000;letter-spacing:-0.2px;">Bewerken</div>
<div class="a" style="left:450px;top:594px;width:422px;height:316px;background:#fff;border:1px solid #646464;"></div>
<div class="a" style="left:451px;top:613px;width:420px;height:1px;background:#f0f0f0;"></div>
<div class="a" style="left:601px;top:595px;width:1px;height:18px;background:#e5e5e5;"></div>
<div class="a" style="left:650px;top:595px;width:1px;height:18px;background:#e5e5e5;"></div>
<div class="a" style="left:740px;top:595px;width:1px;height:18px;background:#e5e5e5;"></div>
<div class="a" style="left:830px;top:595px;width:1px;height:18px;background:#e5e5e5;"></div>
<div class="a" style="left:451px;top:595px;width:420px;height:18px;overflow:hidden">
<div class="t " style="left:6px;top:2.00px;font-size:12px;color:#000;transform:scaleX(0.865);transform-origin:0 0;">Nummer</div>
<div class="t " style="left:161px;top:2.00px;font-size:12px;color:#000;transform:scaleX(0.865);transform-origin:0 0;">Aantal</div>
<div class="t " style="left:205.60000000000002px;top:2.00px;font-size:12px;color:#000;transform:scaleX(0.865);transform-origin:0 0;">Ontvangstdatum</div>
<div class="t " style="left:296px;top:2.00px;font-size:12px;color:#000;transform:scaleX(0.865);transform-origin:0 0;">Verloopdatum</div>
<div class="t " style="left:386px;top:2.00px;font-size:12px;color:#000;transform:scaleX(0.865);transform-origin:0 0;">Uitvoeren</div>
</div>
<div class="a" style="left:451px;top:893px;width:420px;height:16px;background:#f0f0f0;"></div>
<div class="a" style="left:468px;top:893px;width:170px;height:15px;background:#cdcdcd;"></div>
<svg class="a" style="left:457px;top:897px;" width="6" height="8" viewBox="0 0 6 8"><path d="M5 0.5L1.5 4L5 7.5" fill="none" stroke="#555" stroke-width="2"/></svg>
<svg class="a" style="left:860px;top:897px;" width="6" height="8" viewBox="0 0 6 8"><path d="M1 0.5L4.5 4L1 7.5" fill="none" stroke="#555" stroke-width="2"/></svg>
<div class="t " style="left:889.3px;top:212.00px;font-size:12px;color:#000;font-weight:bold;transform:scaleX(0.95);transform-origin:0 0;">Prijzen</div>
<div class="t " style="left:1091px;top:212.00px;font-size:12px;color:#000;font-weight:bold;">EUR</div>
<div class="t " style="left:1202.2px;top:212.00px;font-size:12px;color:#000;font-weight:bold;">CHF</div>
<div class="t " style="left:1318.8px;top:212.00px;font-size:12px;color:#000;font-weight:bold;">BTW</div>
<div class="t " style="left:889.3px;top:234.00px;font-size:12px;color:#000;transform:scaleX(0.865);transform-origin:0 0;">Inkoopprijs</div>
<div class="a" style="left:1088px;top:228px;width:110px;height:20px;background:#fff;border:1px solid #7a7a7a;"></div>
<div class="a" style="left:1200px;top:228px;width:110px;height:20px;background:#ffffe1;border:1px solid #7a7a7a;"></div>
<div class="t" style="right:572px;top:232px;font-size:12px;color:#000;transform:scaleX(0.89);transform-origin:100% 0;">45.000,00</div>
<div class="t" style="right:459px;top:232px;font-size:12px;color:#000;transform:scaleX(0.89);transform-origin:100% 0;">38.543,90</div>
<div class="a" style="left:1316px;top:232px;width:13px;height:13px;background:#fff;border:1px solid #333;"></div>
<svg class="a" style="left:1316px;top:232px;" width="13" height="13" viewBox="0 0 13 13"><path d="M2.5 6.5L5.2 9.5L10.5 3.5" fill="none" stroke="#222" stroke-width="1.1"/></svg>
<div class="t " style="left:1334.4px;top:232.00px;font-size:12px;color:#000;transform:scaleX(0.865);transform-origin:0 0;">excl.</div>
<div class="t " style="left:889.3px;top:261.00px;font-size:12px;color:#000;transform:scaleX(0.865);transform-origin:0 0;">Listenpreis</div>
<div class="a" style="left:1088px;top:255px;width:110px;height:20px;background:#fff;border:1px solid #7a7a7a;"></div>
<div class="a" style="left:1200px;top:255px;width:110px;height:20px;background:#ffffe1;border:1px solid #7a7a7a;"></div>
<div class="t" style="right:572px;top:259px;font-size:12px;color:#000;transform:scaleX(0.89);transform-origin:100% 0;">59.000,00</div>
<div class="t" style="right:459px;top:259px;font-size:12px;color:#000;transform:scaleX(0.89);transform-origin:100% 0;">50.535,35</div>
<div class="a" style="left:1316px;top:259px;width:13px;height:13px;background:#fff;border:1px solid #333;"></div>
<svg class="a" style="left:1316px;top:259px;" width="13" height="13" viewBox="0 0 13 13"><path d="M2.5 6.5L5.2 9.5L10.5 3.5" fill="none" stroke="#222" stroke-width="1.1"/></svg>
<div class="t " style="left:1334.4px;top:259.00px;font-size:12px;color:#000;transform:scaleX(0.865);transform-origin:0 0;">excl.</div>
<div class="t " style="left:889.3px;top:288.00px;font-size:12px;color:#000;transform:scaleX(0.865);transform-origin:0 0;">Prijs 1</div>
<div class="a" style="left:1088px;top:282px;width:110px;height:20px;background:#fff;border:1px solid #7a7a7a;"></div>
<div class="a" style="left:1200px;top:282px;width:110px;height:20px;background:#ffffe1;border:1px solid #7a7a7a;"></div>
<div class="t" style="right:572px;top:286px;font-size:12px;color:#000;transform:scaleX(0.89);transform-origin:100% 0;">57.000,00</div>
<div class="t" style="right:459px;top:286px;font-size:12px;color:#000;transform:scaleX(0.89);transform-origin:100% 0;">48.822,25</div>
<div class="a" style="left:1316px;top:286px;width:13px;height:13px;background:#fff;border:1px solid #333;"></div>
<svg class="a" style="left:1316px;top:286px;" width="13" height="13" viewBox="0 0 13 13"><path d="M2.5 6.5L5.2 9.5L10.5 3.5" fill="none" stroke="#222" stroke-width="1.1"/></svg>
<div class="t " style="left:1334.4px;top:286.00px;font-size:12px;color:#000;transform:scaleX(0.865);transform-origin:0 0;">excl.</div>
<div class="t " style="left:889.3px;top:310.00px;font-size:12px;color:#000;transform:scaleX(0.865);transform-origin:0 0;">Prijs 2</div>
<div class="a" style="left:1088px;top:304px;width:110px;height:20px;background:#fff;border:1px solid #7a7a7a;"></div>
<div class="a" style="left:1200px;top:304px;width:110px;height:20px;background:#ffffe1;border:1px solid #7a7a7a;"></div>
<div class="t" style="right:572px;top:308px;font-size:12px;color:#000;transform:scaleX(0.89);transform-origin:100% 0;">57.000,00</div>
<div class="t" style="right:459px;top:308px;font-size:12px;color:#000;transform:scaleX(0.89);transform-origin:100% 0;">48.822,25</div>
<div class="a" style="left:1316px;top:308px;width:13px;height:13px;background:#fff;border:1px solid #333;"></div>
<svg class="a" style="left:1316px;top:308px;" width="13" height="13" viewBox="0 0 13 13"><path d="M2.5 6.5L5.2 9.5L10.5 3.5" fill="none" stroke="#222" stroke-width="1.1"/></svg>
<div class="t " style="left:1334.4px;top:308.00px;font-size:12px;color:#000;transform:scaleX(0.865);transform-origin:0 0;">excl.</div>
<div class="t " style="left:889.3px;top:332.00px;font-size:12px;color:#000;transform:scaleX(0.865);transform-origin:0 0;">Prijs 3</div>
<div class="a" style="left:1088px;top:326px;width:110px;height:20px;background:#fff;border:1px solid #7a7a7a;"></div>
<div class="a" style="left:1200px;top:326px;width:110px;height:20px;background:#ffffe1;border:1px solid #7a7a7a;"></div>
<div class="t" style="right:572px;top:330px;font-size:12px;color:#000;transform:scaleX(0.89);transform-origin:100% 0;">57.000,00</div>
<div class="t" style="right:459px;top:330px;font-size:12px;color:#000;transform:scaleX(0.89);transform-origin:100% 0;">48.822,25</div>
<div class="a" style="left:1316px;top:330px;width:13px;height:13px;background:#fff;border:1px solid #333;"></div>
<svg class="a" style="left:1316px;top:330px;" width="13" height="13" viewBox="0 0 13 13"><path d="M2.5 6.5L5.2 9.5L10.5 3.5" fill="none" stroke="#222" stroke-width="1.1"/></svg>
<div class="t " style="left:1334.4px;top:330.00px;font-size:12px;color:#000;transform:scaleX(0.865);transform-origin:0 0;">excl.</div>
<div class="t " style="left:889.3px;top:354.00px;font-size:12px;color:#000;transform:scaleX(0.865);transform-origin:0 0;">Prijs 4</div>
<div class="a" style="left:1088px;top:348px;width:110px;height:20px;background:#fff;border:1px solid #7a7a7a;"></div>
<div class="a" style="left:1200px;top:348px;width:110px;height:20px;background:#ffffe1;border:1px solid #7a7a7a;"></div>
<div class="t" style="right:572px;top:352px;font-size:12px;color:#000;transform:scaleX(0.89);transform-origin:100% 0;">57.000,00</div>
<div class="t" style="right:459px;top:352px;font-size:12px;color:#000;transform:scaleX(0.89);transform-origin:100% 0;">48.822,25</div>
<div class="a" style="left:1316px;top:352px;width:13px;height:13px;background:#fff;border:1px solid #333;"></div>
<svg class="a" style="left:1316px;top:352px;" width="13" height="13" viewBox="0 0 13 13"><path d="M2.5 6.5L5.2 9.5L10.5 3.5" fill="none" stroke="#222" stroke-width="1.1"/></svg>
<div class="t " style="left:1334.4px;top:352.00px;font-size:12px;color:#000;transform:scaleX(0.865);transform-origin:0 0;">excl.</div>
<div class="t " style="left:889.3px;top:376.00px;font-size:12px;color:#000;transform:scaleX(0.865);transform-origin:0 0;">Prijs 5</div>
<div class="a" style="left:1088px;top:370px;width:110px;height:20px;background:#fff;border:1px solid #7a7a7a;"></div>
<div class="a" style="left:1200px;top:370px;width:110px;height:20px;background:#ffffe1;border:1px solid #7a7a7a;"></div>
<div class="t" style="right:572px;top:374px;font-size:12px;color:#000;transform:scaleX(0.89);transform-origin:100% 0;">57.000,00</div>
<div class="t" style="right:459px;top:374px;font-size:12px;color:#000;transform:scaleX(0.89);transform-origin:100% 0;">48.822,25</div>
<div class="a" style="left:1316px;top:374px;width:13px;height:13px;background:#fff;border:1px solid #333;"></div>
<svg class="a" style="left:1316px;top:374px;" width="13" height="13" viewBox="0 0 13 13"><path d="M2.5 6.5L5.2 9.5L10.5 3.5" fill="none" stroke="#222" stroke-width="1.1"/></svg>
<div class="t " style="left:1334.4px;top:374.00px;font-size:12px;color:#000;transform:scaleX(0.865);transform-origin:0 0;">excl.</div>
<div class="t " style="left:889.3px;top:398.00px;font-size:12px;color:#000;transform:scaleX(0.865);transform-origin:0 0;">Prijs 6</div>
<div class="a" style="left:1088px;top:392px;width:110px;height:20px;background:#fff;border:1px solid #7a7a7a;"></div>
<div class="a" style="left:1200px;top:392px;width:110px;height:20px;background:#ffffe1;border:1px solid #7a7a7a;"></div>
<div class="t" style="right:572px;top:396px;font-size:12px;color:#000;transform:scaleX(0.89);transform-origin:100% 0;">57.000,00</div>
<div class="t" style="right:459px;top:396px;font-size:12px;color:#000;transform:scaleX(0.89);transform-origin:100% 0;">48.822,25</div>
<div class="a" style="left:1316px;top:396px;width:13px;height:13px;background:#fff;border:1px solid #333;"></div>
<svg class="a" style="left:1316px;top:396px;" width="13" height="13" viewBox="0 0 13 13"><path d="M2.5 6.5L5.2 9.5L10.5 3.5" fill="none" stroke="#222" stroke-width="1.1"/></svg>
<div class="t " style="left:1334.4px;top:396.00px;font-size:12px;color:#000;transform:scaleX(0.865);transform-origin:0 0;">excl.</div>
<div class="t " style="left:889.3px;top:420.00px;font-size:12px;color:#000;transform:scaleX(0.865);transform-origin:0 0;">Prijs 7</div>
<div class="a" style="left:1088px;top:414px;width:110px;height:20px;background:#fff;border:1px solid #7a7a7a;"></div>
<div class="a" style="left:1200px;top:414px;width:110px;height:20px;background:#ffffe1;border:1px solid #7a7a7a;"></div>
<div class="t" style="right:572px;top:418px;font-size:12px;color:#000;transform:scaleX(0.89);transform-origin:100% 0;">57.000,00</div>
<div class="t" style="right:459px;top:418px;font-size:12px;color:#000;transform:scaleX(0.89);transform-origin:100% 0;">48.822,25</div>
<div class="a" style="left:1316px;top:418px;width:13px;height:13px;background:#fff;border:1px solid #333;"></div>
<svg class="a" style="left:1316px;top:418px;" width="13" height="13" viewBox="0 0 13 13"><path d="M2.5 6.5L5.2 9.5L10.5 3.5" fill="none" stroke="#222" stroke-width="1.1"/></svg>
<div class="t " style="left:1334.4px;top:418.00px;font-size:12px;color:#000;transform:scaleX(0.865);transform-origin:0 0;">excl.</div>
<div class="t " style="left:889.3px;top:442.00px;font-size:12px;color:#000;transform:scaleX(0.865);transform-origin:0 0;">Prijs 8</div>
<div class="a" style="left:1088px;top:436px;width:110px;height:20px;background:#fff;border:1px solid #0078d7;"></div>
<div class="a" style="left:1200px;top:436px;width:110px;height:20px;background:#ffffe1;border:1px solid #7a7a7a;"></div>
<div class="t" style="right:572px;top:440px;font-size:12px;color:#000;transform:scaleX(0.89);transform-origin:100% 0;">57.000,00</div>
<div class="t" style="right:459px;top:440px;font-size:12px;color:#000;transform:scaleX(0.89);transform-origin:100% 0;">48.822,25</div>
<div class="a" style="left:1316px;top:440px;width:13px;height:13px;background:#fff;border:1px solid #333;"></div>
<svg class="a" style="left:1316px;top:440px;" width="13" height="13" viewBox="0 0 13 13"><path d="M2.5 6.5L5.2 9.5L10.5 3.5" fill="none" stroke="#222" stroke-width="1.1"/></svg>
<div class="t " style="left:1334.4px;top:440.00px;font-size:12px;color:#000;transform:scaleX(0.865);transform-origin:0 0;">excl.</div>
<div class="t " style="left:889.3px;top:464.00px;font-size:12px;color:#000;transform:scaleX(0.865);transform-origin:0 0;">Huurprijs</div>
<div class="a" style="left:1088px;top:458px;width:110px;height:20px;background:#fff;border:1px solid #7a7a7a;"></div>
<div class="a" style="left:1200px;top:458px;width:110px;height:20px;background:#ffffe1;border:1px solid #7a7a7a;"></div>
<div class="t" style="right:572px;top:462px;font-size:12px;color:#000;transform:scaleX(0.89);transform-origin:100% 0;">100,00</div>
<div class="t" style="right:459px;top:462px;font-size:12px;color:#000;transform:scaleX(0.89);transform-origin:100% 0;">85,65</div>
<div class="a" style="left:1316px;top:462px;width:13px;height:13px;background:#fff;border:1px solid #333;"></div>
<svg class="a" style="left:1316px;top:462px;" width="13" height="13" viewBox="0 0 13 13"><path d="M2.5 6.5L5.2 9.5L10.5 3.5" fill="none" stroke="#222" stroke-width="1.1"/></svg>
<div class="t " style="left:1334.4px;top:462.00px;font-size:12px;color:#000;transform:scaleX(0.865);transform-origin:0 0;">excl.</div>
<div class="t " style="left:889.3px;top:491.00px;font-size:12px;color:#000;transform:scaleX(0.865);transform-origin:0 0;">Aktirprijs</div>
<div class="a" style="left:1088px;top:485px;width:110px;height:20px;background:#fff;border:1px solid #7a7a7a;"></div>
<div class="a" style="left:1200px;top:485px;width:110px;height:20px;background:#ffffe1;border:1px solid #7a7a7a;"></div>
<div class="t" style="right:572px;top:489px;font-size:12px;color:#000;transform:scaleX(0.89);transform-origin:100% 0;">55.300,00</div>
<div class="t" style="right:459px;top:489px;font-size:12px;color:#000;transform:scaleX(0.89);transform-origin:100% 0;">47.366,15</div>
<div class="a" style="left:1316px;top:489px;width:13px;height:13px;background:#fff;border:1px solid #333;"></div>
<svg class="a" style="left:1316px;top:489px;" width="13" height="13" viewBox="0 0 13 13"><path d="M2.5 6.5L5.2 9.5L10.5 3.5" fill="none" stroke="#222" stroke-width="1.1"/></svg>
<div class="t " style="left:1334.4px;top:489.00px;font-size:12px;color:#000;transform:scaleX(0.865);transform-origin:0 0;">excl.</div>
<div class="a" style="left:1162px;top:439px;width:1px;height:13px;background:#000;"></div>
<div class="t " style="left:889.3px;top:518.00px;font-size:12px;color:#000;transform:scaleX(0.865);transform-origin:0 0;">Actie</div>
<div class="a" style="left:936px;top:512px;width:93px;height:21px;background:#e5e5e5;border:1px solid #adadad;"></div>
<svg class="a" style="left:1016.0px;top:520.0px;" width="9" height="5" viewBox="0 0 9 5"><path d="M0.5 0.5L4 4L7.5 0.5" fill="none" stroke="#444" stroke-width="1.3"/></svg>
<div class="t " style="left:940.3px;top:517.00px;font-size:12px;color:#000;transform:scaleX(0.865);transform-origin:0 0;">Actieprijs</div>
<div class="a" style="left:1088px;top:512px;width:111px;height:20px;background:#fff;border:1px solid #7a7a7a;"></div>
<div class="a" style="left:1091px;top:515px;width:13px;height:13px;background:#fff;border:1px solid #3c7fd0;"></div>
<div class="t " style="left:1107px;top:515.00px;font-size:12px;color:#888;transform:scaleX(0.865);transform-origin:0 0;">17.02.2020</div>
<svg class="a" style="left:1171px;top:516px;" width="12" height="12" viewBox="0 0 12 12"><rect x="0.5" y="0.5" width="10" height="11" fill="#e8e8e8" stroke="#888"/><path d="M1 3h10M1 5.5h10M1 8h10M3.5 3v8M6 3v8M8.5 3v8" stroke="#aaa" stroke-width="0.6"/></svg>
<svg class="a" style="left:1183px;top:520px;" width="7" height="4" viewBox="0 0 7 4"><path d="M0 0h7l-3.5 4z" fill="#3a5080"/></svg>
<div class="a" style="left:1200px;top:512px;width:110px;height:20px;background:#fff;border:1px solid #7a7a7a;"></div>
<div class="a" style="left:1203px;top:515px;width:13px;height:13px;background:#fff;border:1px solid #3c7fd0;"></div>
<div class="t " style="left:1219px;top:515.00px;font-size:12px;color:#888;transform:scaleX(0.865);transform-origin:0 0;">17.02.2020</div>
<svg class="a" style="left:1283px;top:516px;" width="12" height="12" viewBox="0 0 12 12"><rect x="0.5" y="0.5" width="10" height="11" fill="#e8e8e8" stroke="#888"/><path d="M1 3h10M1 5.5h10M1 8h10M3.5 3v8M6 3v8M8.5 3v8" stroke="#aaa" stroke-width="0.6"/></svg>
<svg class="a" style="left:1295px;top:520px;" width="7" height="4" viewBox="0 0 7 4"><path d="M0 0h7l-3.5 4z" fill="#3a5080"/></svg>
<div class="t " style="left:1392.4px;top:212.00px;font-size:12px;color:#000;font-weight:bold;transform:scaleX(0.96);transform-origin:0 0;">Codering</div>
<div class="t " style="left:1393px;top:234.00px;font-size:12px;color:#000;transform:scaleX(0.865);transform-origin:0 0;">Marke</div>
<div class="a" style="left:1544px;top:228px;width:204px;height:21px;background:#fff;border:1px solid #7a7a7a;"></div>
<svg class="a" style="left:1735.0px;top:236.0px;" width="9" height="5" viewBox="0 0 9 5"><path d="M0.5 0.5L4 4L7.5 0.5" fill="none" stroke="#444" stroke-width="1.3"/></svg>
<div class="t " style="left:1393px;top:256.00px;font-size:12px;color:#000;transform:scaleX(0.865);transform-origin:0 0;">Typ</div>
<div class="a" style="left:1544px;top:250px;width:204px;height:21px;background:#fff;border:1px solid #7a7a7a;"></div>
<svg class="a" style="left:1735.0px;top:258.0px;" width="9" height="5" viewBox="0 0 9 5"><path d="M0.5 0.5L4 4L7.5 0.5" fill="none" stroke="#444" stroke-width="1.3"/></svg>
<div class="t " style="left:1393px;top:278.00px;font-size:12px;color:#000;transform:scaleX(0.865);transform-origin:0 0;">Dimension</div>
<div class="a" style="left:1544px;top:272px;width:204px;height:21px;background:#fff;border:1px solid #7a7a7a;"></div>
<svg class="a" style="left:1735.0px;top:280.0px;" width="9" height="5" viewBox="0 0 9 5"><path d="M0.5 0.5L4 4L7.5 0.5" fill="none" stroke="#444" stroke-width="1.3"/></svg>
<div class="t " style="left:1393px;top:300.00px;font-size:12px;color:#000;transform:scaleX(0.865);transform-origin:0 0;">Bauweise</div>
<div class="a" style="left:1544px;top:294px;width:204px;height:21px;background:#fff;border:1px solid #7a7a7a;"></div>
<svg class="a" style="left:1735.0px;top:302.0px;" width="9" height="5" viewBox="0 0 9 5"><path d="M0.5 0.5L4 4L7.5 0.5" fill="none" stroke="#444" stroke-width="1.3"/></svg>
<div class="t " style="left:1393px;top:322.00px;font-size:12px;color:#000;transform:scaleX(0.865);transform-origin:0 0;">Felgendurchmesser</div>
<div class="a" style="left:1544px;top:316px;width:204px;height:21px;background:#fff;border:1px solid #7a7a7a;"></div>
<svg class="a" style="left:1735.0px;top:324.0px;" width="9" height="5" viewBox="0 0 9 5"><path d="M0.5 0.5L4 4L7.5 0.5" fill="none" stroke="#444" stroke-width="1.3"/></svg>
<div class="t " style="left:1393px;top:344.00px;font-size:12px;color:#000;transform:scaleX(0.865);transform-origin:0 0;">Trag. Geschw. Index</div>
<div class="a" style="left:1544px;top:338px;width:204px;height:21px;background:#fff;border:1px solid #7a7a7a;"></div>
<svg class="a" style="left:1735.0px;top:346.0px;" width="9" height="5" viewBox="0 0 9 5"><path d="M0.5 0.5L4 4L7.5 0.5" fill="none" stroke="#444" stroke-width="1.3"/></svg>
<div class="t " style="left:1393px;top:366.00px;font-size:12px;color:#000;transform:scaleX(0.865);transform-origin:0 0;">Info</div>
<div class="a" style="left:1544px;top:360px;width:204px;height:21px;background:#fff;border:1px solid #7a7a7a;"></div>
<svg class="a" style="left:1735.0px;top:368.0px;" width="9" height="5" viewBox="0 0 9 5"><path d="M0.5 0.5L4 4L7.5 0.5" fill="none" stroke="#444" stroke-width="1.3"/></svg>
<div class="t " style="left:1393px;top:388.00px;font-size:12px;color:#000;transform:scaleX(0.865);transform-origin:0 0;">Serie</div>
<div class="a" style="left:1544px;top:382px;width:204px;height:21px;background:#fff;border:1px solid #7a7a7a;"></div>
<svg class="a" style="left:1735.0px;top:390.0px;" width="9" height="5" viewBox="0 0 9 5"><path d="M0.5 0.5L4 4L7.5 0.5" fill="none" stroke="#444" stroke-width="1.3"/></svg>
<div class="t " style="left:1393px;top:410.00px;font-size:12px;color:#000;transform:scaleX(0.865);transform-origin:0 0;">-</div>
<div class="a" style="left:1544px;top:404px;width:204px;height:21px;background:#fff;border:1px solid #7a7a7a;"></div>
<svg class="a" style="left:1735.0px;top:412.0px;" width="9" height="5" viewBox="0 0 9 5"><path d="M0.5 0.5L4 4L7.5 0.5" fill="none" stroke="#444" stroke-width="1.3"/></svg>
<div class="t " style="left:1393px;top:432.00px;font-size:12px;color:#000;transform:scaleX(0.865);transform-origin:0 0;">-</div>
<div class="a" style="left:1544px;top:426px;width:204px;height:21px;background:#fff;border:1px solid #7a7a7a;"></div>
<svg class="a" style="left:1735.0px;top:434.0px;" width="9" height="5" viewBox="0 0 9 5"><path d="M0.5 0.5L4 4L7.5 0.5" fill="none" stroke="#444" stroke-width="1.3"/></svg>
<div class="t " style="left:1391.3px;top:461.00px;font-size:12px;color:#000;transform:scaleX(0.865);transform-origin:0 0;">Productgroep</div>
<div class="a" style="left:1545px;top:457px;width:158px;height:21px;background:#e5e5e5;border:1px solid #adadad;"></div>
<svg class="a" style="left:1690.0px;top:465.0px;" width="9" height="5" viewBox="0 0 9 5"><path d="M0.5 0.5L4 4L7.5 0.5" fill="none" stroke="#444" stroke-width="1.3"/></svg>
<div class="t " style="left:1549.4px;top:462.00px;font-size:12px;color:#000;transform:scaleX(0.865);transform-origin:0 0;">&lt; Keine Warengruppe &gt;</div>
<div class="a" style="left:1704px;top:457px;width:21px;height:21px;background:#e5e5e5;border:1px solid #adadad;"></div>
<svg class="a" style="left:1708px;top:461px;" width="13" height="13" viewBox="0 0 13 13"><circle cx="8" cy="5" r="3.6" fill="none" stroke="#1040c0" stroke-width="1.8"/><path d="M5.5 7.5L1.5 11.5" stroke="#0a2a90" stroke-width="2.2"/></svg>
<div class="a" style="left:1726px;top:457px;width:21px;height:21px;background:#e5e5e5;border:1px solid #adadad;"></div>
<svg class="a" style="left:1729px;top:460px;" width="15" height="15" viewBox="0 0 15 15"><path d="M0.5 3.5h5l1 1.5h7v9h-13z" fill="#f0c850" stroke="#8a6a10"/><rect x="7" y="1" width="7" height="12" fill="#fff" stroke="#555" stroke-width="0.8"/><path d="M8.5 4h4M8.5 6h4M8.5 8h4" stroke="#2050c0" stroke-width="0.8"/><path d="M0.5 7h13v7.5h-13z" fill="#f4d060" stroke="#8a6a10"/></svg>
<div class="t " style="left:1391.3px;top:488.00px;font-size:12px;color:#000;transform:scaleX(0.865);transform-origin:0 0;">Montagegroep</div>
<div class="a" style="left:1545px;top:484px;width:202px;height:21px;background:#e5e5e5;border:1px solid #adadad;"></div>
<svg class="a" style="left:1734.0px;top:492.0px;" width="9" height="5" viewBox="0 0 9 5"><path d="M0.5 0.5L4 4L7.5 0.5" fill="none" stroke="#444" stroke-width="1.3"/></svg>
<div class="t " style="left:1549.4px;top:489.00px;font-size:12px;color:#000;transform:scaleX(0.865);transform-origin:0 0;">&lt; Keine Montagegruppe &gt;</div>
<div class="t " style="left:1391.3px;top:515.00px;font-size:12px;color:#000;transform:scaleX(0.865);transform-origin:0 0;">Huurgroep</div>
<div class="a" style="left:1545px;top:511px;width:202px;height:21px;background:#e5e5e5;border:1px solid #adadad;"></div>
<svg class="a" style="left:1734.0px;top:519.0px;" width="9" height="5" viewBox="0 0 9 5"><path d="M0.5 0.5L4 4L7.5 0.5" fill="none" stroke="#444" stroke-width="1.3"/></svg>
<div class="t " style="left:1549.4px;top:515.00px;font-size:12px;color:#000;transform:scaleX(0.865);transform-origin:0 0;">Mietgruppe Anzahl*M_Preis</div>
<div class="a" style="left:886px;top:567px;width:862px;height:346px;background:#fff;border:1px solid #dcdcdc;"></div>
<div class="a" style="left:967px;top:548px;width:120px;height:20px;background:#f0f0f0;border:1px solid #dcdcdc;"></div>
<svg class="a" style="left:971px;top:549px;" width="17" height="16" viewBox="0 0 17 16"><g transform="translate(2.5 0) scale(0.72)"><path d="M0.5 3.5h10.5l1 1.5v2.5H6.5v4h-3v-4H0.5z" fill="#c4c4c4"/><path d="M1 3.6h9" stroke="#fff" stroke-width="0.9"/><path d="M0.5 7.8h3M6.5 7.8h5" stroke="#000" stroke-width="1.2"/><path d="M3.6 7.8v4M6.4 7.8v4" stroke="#000" stroke-width="1"/><rect x="10.5" y="0.5" width="4" height="4.5" fill="#c4c4c4"/><path d="M14.4 0.5v5" stroke="#000" stroke-width="1.2"/><rect x="11.5" y="5" width="2.6" height="7" fill="#c4c4c4"/><path d="M11.6 5.5v6.5M14 5v7" stroke="#000" stroke-width="1"/><path d="M10 3.5l2 2" stroke="#000" stroke-width="1"/></g><path d="M5 9.5l2 1" stroke="#1020c0" stroke-width="1.2"/><rect x="9.5" y="7.5" width="1.6" height="4" fill="#e01010"/><path d="M2.5 14v-2.5h12V14M8.5 10.5v3.5" fill="none" stroke="#1030d0" stroke-width="1"/><rect x="0.5" y="13" width="4" height="2.8" fill="#f0d000" stroke="#000" stroke-width="0.7"/><rect x="6.5" y="13" width="4" height="2.8" fill="#f0d000" stroke="#000" stroke-width="0.7"/><rect x="12.5" y="13" width="4" height="2.8" fill="#f0d000" stroke="#000" stroke-width="0.7"/></svg>
<div class="t " style="left:992.9px;top:553.00px;font-size:12px;color:#000;transform:scaleX(0.865);transform-origin:0 0;">Volgende artikelen</div>
<div class="a" style="left:1086px;top:548px;width:71px;height:20px;background:#f0f0f0;border:1px solid #dcdcdc;"></div>
<svg class="a" style="left:1093px;top:549px;" width="17" height="16" viewBox="0 0 17 16"><g transform="translate(0 0) scale(0.72)"><path d="M0.5 3.5h10.5l1 1.5v2.5H6.5v4h-3v-4H0.5z" fill="#c4c4c4"/><path d="M1 3.6h9" stroke="#fff" stroke-width="0.9"/><path d="M0.5 7.8h3M6.5 7.8h5" stroke="#000" stroke-width="1.2"/><path d="M3.6 7.8v4M6.4 7.8v4" stroke="#000" stroke-width="1"/><rect x="10.5" y="0.5" width="4" height="4.5" fill="#c4c4c4"/><path d="M14.4 0.5v5" stroke="#000" stroke-width="1.2"/><rect x="11.5" y="5" width="2.6" height="7" fill="#c4c4c4"/><path d="M11.6 5.5v6.5M14 5v7" stroke="#000" stroke-width="1"/><path d="M10 3.5l2 2" stroke="#000" stroke-width="1"/></g><path d="M2 8l2.5 1.5" stroke="#1020c0" stroke-width="1.2"/><rect x="9" y="6.5" width="1.5" height="2" fill="#e01010"/><path d="M4.5 10v4.5h3" fill="none" stroke="#000" stroke-width="1.2"/><rect x="8" y="10" width="8" height="2.2" fill="#1030e0"/><rect x="8" y="13.3" width="8" height="2.2" fill="#1030e0"/></svg>
<div class="t " style="left:1115px;top:553.00px;font-size:12px;color:#000;transform:scaleX(0.865);transform-origin:0 0;">Stuklijst</div>
<div class="a" style="left:1156px;top:548px;width:119px;height:20px;background:#f0f0f0;border:1px solid #dcdcdc;"></div>
<svg class="a" style="left:1163px;top:549px;" width="16" height="16" viewBox="0 0 16 16"><path d="M10 6L2 14" stroke="#c01020" stroke-width="2.4"/><path d="M2 14l1.5-1.5" stroke="#601010" stroke-width="2.4"/><path d="M4 4l10 10" stroke="#222" stroke-width="1.4"/><path d="M1 2.5a3 3 0 0 0 4.5 3" fill="none" stroke="#2050c0" stroke-width="1.6"/><path d="M7 2c2-2 6-1 7 2l-3 1z" fill="#999" stroke="#555" stroke-width="0.6"/><path d="M13 13l2 1" stroke="#2050c0" stroke-width="1.5"/></svg>
<div class="t " style="left:1184.5px;top:553.00px;font-size:12px;color:#000;transform:scaleX(0.865);transform-origin:0 0;">Gereedschapslijst</div>
<div class="a" style="left:1274px;top:548px;width:101px;height:20px;background:#f0f0f0;border:1px solid #dcdcdc;"></div>
<svg class="a" style="left:1280px;top:549px;" width="17" height="17" viewBox="0 0 17 17"><g transform="translate(0 0) scale(0.72)"><path d="M0.5 3.5h10.5l1 1.5v2.5H6.5v4h-3v-4H0.5z" fill="#c4c4c4"/><path d="M1 3.6h9" stroke="#fff" stroke-width="0.9"/><path d="M0.5 7.8h3M6.5 7.8h5" stroke="#000" stroke-width="1.2"/><path d="M3.6 7.8v4M6.4 7.8v4" stroke="#000" stroke-width="1"/><rect x="10.5" y="0.5" width="4" height="4.5" fill="#c4c4c4"/><path d="M14.4 0.5v5" stroke="#000" stroke-width="1.2"/><rect x="11.5" y="5" width="2.6" height="7" fill="#c4c4c4"/><path d="M11.6 5.5v6.5M14 5v7" stroke="#000" stroke-width="1"/><path d="M10 3.5l2 2" stroke="#000" stroke-width="1"/></g><path d="M2 8l2.5 1.5" stroke="#1020c0" stroke-width="1.2"/><rect x="9" y="6.5" width="1.5" height="2" fill="#e01010"/><ellipse cx="10.5" cy="12.5" rx="4.5" ry="4" fill="#e01010"/><ellipse cx="10.5" cy="11.5" rx="3.5" ry="3" fill="#d0a020"/><ellipse cx="10.5" cy="11.5" rx="2" ry="1.5" fill="#f8d0a0"/></svg>
<div class="t " style="left:1301.8px;top:553.00px;font-size:12px;color:#000;transform:scaleX(0.865);transform-origin:0 0;">Halffabricaten</div>
<div class="a" style="left:1374px;top:548px;width:141px;height:20px;background:#f0f0f0;border:1px solid #dcdcdc;"></div>
<svg class="a" style="left:1380px;top:549px;" width="16" height="16" viewBox="0 0 16 16"><path d="M5.5 5.5h5l1 1v8h-6z" fill="#f4f8ff" stroke="#222" stroke-width="1"/><path d="M8 1.5v4" stroke="#222"/><circle cx="8" cy="1.5" r="1" fill="#222"/><path d="M1 8.5h4.5M11.5 10h4" stroke="#222" stroke-width="1"/><path d="M1 6.5l1 1M1 10.5l1-1M14 8.5l1.5 1.5-1.5 1.5" stroke="#222" stroke-width="0.9" fill="none"/></svg>
<div class="t " style="left:1401.3px;top:553.00px;font-size:12px;color:#000;transform:scaleX(0.865);transform-origin:0 0;">Ondernemingsplannen</div>
<div class="a" style="left:1514px;top:548px;width:50px;height:20px;background:#f0f0f0;border:1px solid #dcdcdc;"></div>
<svg class="a" style="left:1519.5px;top:548px;" width="17" height="17" viewBox="0 0 17 17"><path d="M8.5 0.5L16.5 8.5L8.5 16.5L0.5 8.5z" fill="#7a5a00"/><path d="M8.5 2L15 8.5L8.5 15L2 8.5z" fill="#f0c020"/><path d="M3 7l7-5 2 2-7 5z" fill="#fff0a0"/><path d="M9 15l6-6-1-1-6 6z" fill="#a00000"/><path d="M4 10l5 5" stroke="#c08000" stroke-width="1.5"/></svg>
<div class="t " style="left:1541.7px;top:553.00px;font-size:12px;color:#000;transform:scaleX(0.865);transform-origin:0 0;">Vat</div>
<div class="a" style="left:1563px;top:548px;width:93px;height:20px;background:#f0f0f0;border:1px solid #dcdcdc;"></div>
<svg class="a" style="left:1569.5px;top:548px;" width="17" height="17" viewBox="0 0 17 17"><g transform="translate(2 0) scale(0.72)"><path d="M0.5 3.5h10.5l1 1.5v2.5H6.5v4h-3v-4H0.5z" fill="#c4c4c4"/><path d="M1 3.6h9" stroke="#fff" stroke-width="0.9"/><path d="M0.5 7.8h3M6.5 7.8h5" stroke="#000" stroke-width="1.2"/><path d="M3.6 7.8v4M6.4 7.8v4" stroke="#000" stroke-width="1"/><rect x="10.5" y="0.5" width="4" height="4.5" fill="#c4c4c4"/><path d="M14.4 0.5v5" stroke="#000" stroke-width="1.2"/><rect x="11.5" y="5" width="2.6" height="7" fill="#c4c4c4"/><path d="M11.6 5.5v6.5M14 5v7" stroke="#000" stroke-width="1"/><path d="M10 3.5l2 2" stroke="#000" stroke-width="1"/></g><path d="M4 9l2 1" stroke="#1020c0" stroke-width="1.2"/><path d="M3.5 10.5l2.5 2.5-2.5 2.5-2.5-2.5z" fill="#e030e0"/><path d="M9 11.5l2.5 2.5-2.5 2.5-2.5-2.5z" fill="#f0b000"/><path d="M14 7.5l2.5 2.5-2.5 2.5-2.5-2.5z" fill="#20a0f0"/></svg>
<div class="t " style="left:1592px;top:553.00px;font-size:12px;color:#000;transform:scaleX(0.865);transform-origin:0 0;">Uitvoeringen</div>
<div class="a" style="left:886px;top:546px;width:81px;height:22px;background:#fff;border:1px solid #dcdcdc;border-bottom:none;"></div>
<svg class="a" style="left:894px;top:548px;" width="16" height="15" viewBox="0 0 16 15"><path d="M5.5 2.5h6.5l2.5 2.5v9H5.5z" fill="#fff" stroke="#000" stroke-width="1"/><path d="M14.5 5v9.5H6" fill="none" stroke="#000" stroke-width="1.4"/><path d="M7 7.5h6M7 9.5h6M7 11.5h6" stroke="#9090d8" stroke-width="1"/><path d="M0.5 2.5h4M6 2.5h4" stroke="#000090" stroke-width="2.6"/><path d="M3 0.8h5.5M0.5 4.5h3" stroke="#000090" stroke-width="1.6"/></svg>
<div class="t " style="left:916.2px;top:551.00px;font-size:12px;color:#000;transform:scaleX(0.865);transform-origin:0 0;">Huurpool</div>
<svg class="a" style="left:898px;top:574px;" width="15" height="15" viewBox="0 0 15 15"><path d="M0.5 0.5h7.5l2.5 2.5v11H0.5z" fill="#fff" stroke="#90a8e0" stroke-width="1"/><path d="M8 0.5v2.5h2.5" fill="#2030b0" stroke="#2030b0"/><path d="M10.5 8v6.5H2" fill="none" stroke="#000" stroke-width="1.2"/><path d="M3.5 13.5l8-8.5 2 2-8 8.5-3 0.5z" fill="#f0d020" stroke="#403000" stroke-width="0.7"/><path d="M11.5 5l1.5-1.5 2 2-1.5 1.5z" fill="#e01010"/></svg>
<div class="t " style="left:919.5px;top:577.00px;font-size:11.5px;color:#000;letter-spacing:-0.2px;">Bewerken</div>
<div class="a" style="left:890px;top:594px;width:856px;height:316px;background:#fff;border:1px solid #646464;"></div>
<div class="a" style="left:1040px;top:595px;width:1px;height:18px;background:#e5e5e5;"></div>
<div class="a" style="left:1190px;top:595px;width:1px;height:18px;background:#e5e5e5;"></div>
<div class="a" style="left:1300px;top:595px;width:1px;height:18px;background:#e5e5e5;"></div>
<div class="a" style="left:1410px;top:595px;width:1px;height:18px;background:#e5e5e5;"></div>
<div class="t " style="left:897.3px;top:597.00px;font-size:12px;color:#000;transform:scaleX(0.865);transform-origin:0 0;">Nummer</div>
<div class="t " style="left:1047px;top:597.00px;font-size:12px;color:#000;transform:scaleX(0.865);transform-origin:0 0;">Serienummer</div>
<div class="t " style="left:1197.3px;top:597.00px;font-size:12px;color:#000;transform:scaleX(0.865);transform-origin:0 0;">Uitgang</div>
<div class="t " style="left:1307px;top:597.00px;font-size:12px;color:#000;transform:scaleX(0.865);transform-origin:0 0;">Ontvangst</div>
<div class="a" style="left:891px;top:613px;width:854px;height:19px;background:#e3e3e3;"></div>
<div class="a" style="left:891px;top:632px;width:854px;height:1px;background:#f0f0f0;"></div>
<div class="t " style="left:897.3px;top:616.00px;font-size:12px;color:#000;transform:scaleX(0.89);transform-origin:0 0;">1170</div>
<div class="t " style="left:1047px;top:616.00px;font-size:12px;color:#000;transform:scaleX(0.865);transform-origin:0 0;">Liebherr 0001</div>
<div class="a" style="left:891px;top:651px;width:854px;height:1px;background:#f0f0f0;"></div>
<div class="t " style="left:897.3px;top:635.00px;font-size:12px;color:#000;transform:scaleX(0.89);transform-origin:0 0;">1170</div>
<div class="t " style="left:1047px;top:635.00px;font-size:12px;color:#000;transform:scaleX(0.865);transform-origin:0 0;">Liebherr 0001</div>
<div class="a" style="left:891px;top:670px;width:854px;height:1px;background:#f0f0f0;"></div>
<div class="t " style="left:897.3px;top:654.00px;font-size:12px;color:#000;transform:scaleX(0.89);transform-origin:0 0;">1170</div>
<div class="t " style="left:1047px;top:654.00px;font-size:12px;color:#000;transform:scaleX(0.865);transform-origin:0 0;">Liebherr 0001</div>
<div class="a" style="left:891px;top:689px;width:854px;height:1px;background:#f0f0f0;"></div>
<div class="t " style="left:897.3px;top:673.00px;font-size:12px;color:#000;transform:scaleX(0.89);transform-origin:0 0;">1170</div>
<div class="t " style="left:1047px;top:673.00px;font-size:12px;color:#000;transform:scaleX(0.865);transform-origin:0 0;">Liebherr 0002</div>
<div class="a" style="left:891px;top:708px;width:854px;height:1px;background:#f0f0f0;"></div>
<div class="t " style="left:897.3px;top:692.00px;font-size:12px;color:#000;transform:scaleX(0.89);transform-origin:0 0;">1170</div>
<div class="t " style="left:1047px;top:692.00px;font-size:12px;color:#000;transform:scaleX(0.865);transform-origin:0 0;">Liebherr 0002</div>
<div class="a" style="left:891px;top:727px;width:854px;height:1px;background:#f0f0f0;"></div>
<div class="t " style="left:897.3px;top:711.00px;font-size:12px;color:#000;transform:scaleX(0.89);transform-origin:0 0;">1170</div>
<div class="t " style="left:1047px;top:711.00px;font-size:12px;color:#000;transform:scaleX(0.865);transform-origin:0 0;">Liebherr 0002</div>
<div class="a" style="left:891px;top:746px;width:854px;height:1px;background:#f0f0f0;"></div>
<div class="t " style="left:897.3px;top:730.00px;font-size:12px;color:#000;transform:scaleX(0.89);transform-origin:0 0;">1170</div>
<div class="t " style="left:1047px;top:730.00px;font-size:12px;color:#000;transform:scaleX(0.865);transform-origin:0 0;">Liebherr 0003</div>
<div class="a" style="left:891px;top:765px;width:854px;height:1px;background:#f0f0f0;"></div>
<div class="t " style="left:897.3px;top:749.00px;font-size:12px;color:#000;transform:scaleX(0.89);transform-origin:0 0;">1170</div>
<div class="t " style="left:1047px;top:749.00px;font-size:12px;color:#000;transform:scaleX(0.865);transform-origin:0 0;">Liebherr 0003</div>
<div class="a" style="left:891px;top:784px;width:854px;height:1px;background:#f0f0f0;"></div>
<div class="t " style="left:897.3px;top:768.00px;font-size:12px;color:#000;transform:scaleX(0.89);transform-origin:0 0;">1170</div>
<div class="t " style="left:1047px;top:768.00px;font-size:12px;color:#000;transform:scaleX(0.865);transform-origin:0 0;">Liebherr 0003</div>
<div class="a" style="left:891px;top:803px;width:854px;height:1px;background:#f0f0f0;"></div>
<div class="t " style="left:897.3px;top:787.00px;font-size:12px;color:#000;transform:scaleX(0.89);transform-origin:0 0;">1170</div>
<div class="t " style="left:1047px;top:787.00px;font-size:12px;color:#000;transform:scaleX(0.865);transform-origin:0 0;">Liebherr 0003</div>
<div class="a" style="left:891px;top:822px;width:854px;height:1px;background:#f0f0f0;"></div>
<div class="t " style="left:897.3px;top:806.00px;font-size:12px;color:#000;transform:scaleX(0.89);transform-origin:0 0;">1170</div>
<div class="t " style="left:1047px;top:806.00px;font-size:12px;color:#000;transform:scaleX(0.865);transform-origin:0 0;">Liebherr 0004</div>
<div class="a" style="left:891px;top:841px;width:854px;height:1px;background:#f0f0f0;"></div>
<div class="t " style="left:897.3px;top:825.00px;font-size:12px;color:#000;transform:scaleX(0.89);transform-origin:0 0;">1170</div>
<div class="t " style="left:1047px;top:825.00px;font-size:12px;color:#000;transform:scaleX(0.865);transform-origin:0 0;">Liebherr 0004</div>
<div class="a" style="left:891px;top:860px;width:854px;height:1px;background:#f0f0f0;"></div>
<div class="t " style="left:897.3px;top:844.00px;font-size:12px;color:#000;transform:scaleX(0.89);transform-origin:0 0;">1170</div>
<div class="t " style="left:1047px;top:844.00px;font-size:12px;color:#000;transform:scaleX(0.865);transform-origin:0 0;">Liebherr 0005</div>
<div class="a" style="left:891px;top:879px;width:854px;height:1px;background:#f0f0f0;"></div>
<div class="t " style="left:897.3px;top:863.00px;font-size:12px;color:#000;transform:scaleX(0.89);transform-origin:0 0;">1170</div>
<div class="t " style="left:1047px;top:863.00px;font-size:12px;color:#000;transform:scaleX(0.865);transform-origin:0 0;">Liebherr 0006</div>
<div class="t " style="left:1197px;top:863.00px;font-size:12px;color:#000;transform:scaleX(0.89);transform-origin:0 0;">21.11.2019 00:00:00</div>
<div class="t " style="left:1307px;top:863.00px;font-size:12px;color:#000;transform:scaleX(0.89);transform-origin:0 0;">21.11.2021 12:00:00</div>
<div class="a" style="left:0px;top:2px;width:1px;height:928px;background:#b8b8b8;"></div>
<div class="a" style="left:1px;top:2px;width:1px;height:928px;background:#2b579a;"></div>
<div class="a" style="left:2px;top:152px;width:1px;height:775px;background:#8fb4e3;"></div>
<div class="a" style="left:1762px;top:152px;width:1px;height:775px;background:#8fb4e3;"></div>
<div class="a" style="left:1763px;top:2px;width:1px;height:928px;background:#2b579a;"></div>
<div class="a" style="left:1764px;top:0px;width:2px;height:930px;background:#4d4a7e;"></div>
<div class="a" style="left:1764px;top:773px;width:2px;height:59px;background:#2f6db5;"></div>
<div class="a" style="left:1764px;top:832px;width:2px;height:98px;background:#cfcfcf;"></div>
<div class="a" style="left:1764px;top:850px;width:2px;height:17px;background:#c85a30;"></div>
<div class="a" style="left:1px;top:926px;width:1762px;height:1px;background:#8fb4e3;"></div>
<div class="a" style="left:1px;top:927px;width:1763px;height:3px;background:#2b579a;"></div>
<!--MAIN-->
</body></html>
